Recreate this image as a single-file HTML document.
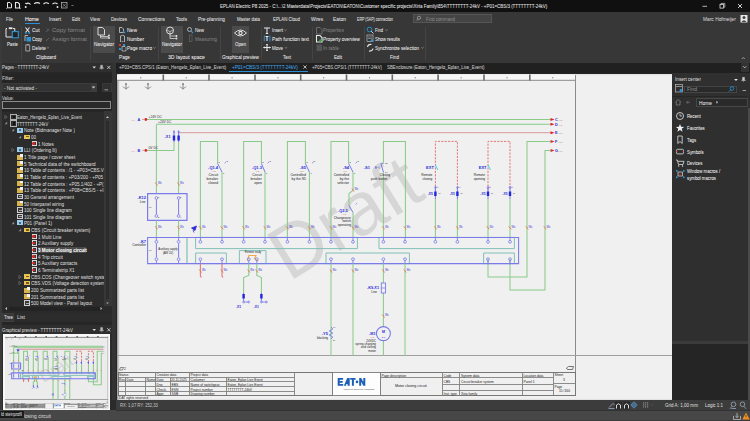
<!DOCTYPE html>
<html><head><meta charset="utf-8"><style>
*{margin:0;padding:0;box-sizing:border-box}
html,body{width:750px;height:421px;overflow:hidden}
body{background:#2b2b2b;position:relative;font-family:"Liberation Sans",sans-serif}
.t{position:absolute;white-space:nowrap;line-height:1;transform-origin:0 50%;-webkit-text-stroke:0.05px currentColor}
.r{position:absolute}
svg{position:absolute;left:0;top:0}
</style></head><body>
<div class="r" style="left:0px;top:0px;width:750px;height:12px;background:#101010;"></div>
<div class="r" style="left:0px;top:12px;width:750px;height:51px;background:#373737;"></div>
<div class="r" style="left:0px;top:63px;width:750px;height:10px;background:#202020;"></div>
<div class="r" style="left:0px;top:63px;width:112px;height:9px;background:#2e2e2e;"></div>
<div class="r" style="left:0px;top:72px;width:112px;height:2px;background:#272727;"></div>
<div class="r" style="left:0px;top:74px;width:112px;height:38px;background:#252525;"></div>
<div class="r" style="left:0px;top:112px;width:112px;height:199px;background:#2c2c2c;"></div>
<div class="r" style="left:0px;top:313px;width:112px;height:9px;background:#2c2c2c;"></div>
<div class="r" style="left:0px;top:322px;width:112px;height:3px;background:#262626;"></div>
<div class="r" style="left:0px;top:325px;width:112px;height:9px;background:#2e2e2e;"></div>
<div class="r" style="left:0px;top:334px;width:113px;height:77px;background:#2b2b2b;"></div>
<div class="r" style="left:112px;top:63px;width:4px;height:337px;background:#333333;"></div>
<div class="r" style="left:116px;top:73px;width:556px;height:327px;background:#262626;"></div>
<div class="r" style="left:116.5px;top:74px;width:555.5px;height:326px;background:#f0f0f0;box-shadow:inset 1.5px 0 1.5px rgba(0,0,0,0.35)"></div>
<div class="r" style="left:672px;top:73px;width:78px;height:268px;background:#2f2f2f;"></div>
<div class="r" style="left:672px;top:341px;width:78px;height:3px;background:#3b3b3b;"></div>
<div class="r" style="left:672px;top:344px;width:78px;height:56px;background:#252525;"></div>
<div class="r" style="left:747.5px;top:108px;width:2.5px;height:292px;background:#4a4a4a;"></div>
<div class="r" style="left:116px;top:400px;width:634px;height:10px;background:#3c3c3c;"></div>
<div class="r" style="left:0px;top:410px;width:750px;height:11px;background:#474747;"></div>
<div class="r" style="left:116px;top:409.7px;width:634px;height:0.9000000000000341px;background:#323232;"></div>
<div class="r" style="left:0px;top:420.2px;width:750px;height:0.8000000000000114px;background:#3c3c3c;"></div>
<div class="r" style="left:0px;top:12px;width:1.5px;height:398px;background:#3a3a3a;"></div>
<div class="t" style="left:220.0px;top:3.0px;font-size:6.12px;color:#e6e6e6;transform:scaleX(0.730);">EPLAN Electric P8 2025 - C:\...\2 Masterdata\Projects\EATON\EATON\Customer specific projects\Xiria Family\854\TTTTTTTT-24kV - +P01=CBS/3 (TTTTTTTT-24kV)</div>
<div class="t" style="left:6.0px;top:16.2px;font-size:6.12px;color:#e2e2e2;transform:scaleX(0.710);">File</div>
<div class="t" style="left:25.0px;top:16.2px;font-size:6.12px;color:#ffffff;transform:scaleX(0.858);">Home</div>
<div class="t" style="left:49.0px;top:16.2px;font-size:6.12px;color:#e2e2e2;transform:scaleX(0.784);">Insert</div>
<div class="t" style="left:72.0px;top:16.2px;font-size:6.12px;color:#e2e2e2;transform:scaleX(0.759);">Edit</div>
<div class="t" style="left:90.0px;top:16.2px;font-size:6.12px;color:#e2e2e2;transform:scaleX(0.760);">View</div>
<div class="t" style="left:111.0px;top:16.2px;font-size:6.12px;color:#e2e2e2;transform:scaleX(0.735);">Devices</div>
<div class="t" style="left:138.0px;top:16.2px;font-size:6.12px;color:#e2e2e2;transform:scaleX(0.794);">Connections</div>
<div class="t" style="left:176.0px;top:16.2px;font-size:6.12px;color:#e2e2e2;transform:scaleX(0.770);">Tools</div>
<div class="t" style="left:198.0px;top:16.2px;font-size:6.12px;color:#e2e2e2;transform:scaleX(0.778);">Pre-planning</div>
<div class="t" style="left:237.0px;top:16.2px;font-size:6.12px;color:#e2e2e2;transform:scaleX(0.712);">Master data</div>
<div class="t" style="left:273.0px;top:16.2px;font-size:6.12px;color:#e2e2e2;transform:scaleX(0.715);">EPLAN Cloud</div>
<div class="t" style="left:311.0px;top:16.2px;font-size:6.12px;color:#e2e2e2;transform:scaleX(0.767);">Wires</div>
<div class="t" style="left:333.0px;top:16.2px;font-size:6.12px;color:#e2e2e2;transform:scaleX(0.813);">Eaton</div>
<div class="t" style="left:357.0px;top:16.2px;font-size:6.12px;color:#e2e2e2;transform:scaleX(0.583);">ERP (SAP) connection</div>
<div class="r" style="left:25px;top:23px;width:15px;height:1px;background:#2c8fd6;"></div>
<div class="r" style="left:413px;top:14px;width:79px;height:9px;background:#444444;border:1px solid #555"></div>
<div class="t" style="left:426.0px;top:15.8px;font-size:6.12px;color:#8a8a8a;transform:scaleX(0.717);">Find command</div>
<div class="t" style="left:703.0px;top:16.2px;font-size:6.12px;color:#d0d0d0;transform:scaleX(0.795);">Marc Hofmeijer</div>
<div class="t" style="left:6.7px;top:40.9px;font-size:6.12px;color:#ececec;transform:scaleX(0.703);">Paste</div>
<div class="t" style="left:32.0px;top:27.2px;font-size:6.12px;color:#ececec;transform:scaleX(0.788);">Cut</div>
<div class="t" style="left:32.0px;top:36.2px;font-size:6.12px;color:#ececec;transform:scaleX(0.700);">Copy</div>
<div class="t" style="left:32.0px;top:44.8px;font-size:6.12px;color:#ececec;transform:scaleX(0.791);">Delete</div>
<div class="t" style="left:52.0px;top:27.2px;font-size:6.12px;color:#808080;transform:scaleX(0.990);">Copy format</div>
<div class="t" style="left:52.0px;top:36.2px;font-size:6.12px;color:#808080;transform:scaleX(0.936);">Assign format</div>
<div class="t" style="left:36.0px;top:54.2px;font-size:6.12px;color:#ececec;transform:scaleX(0.764);">Clipboard</div>
<div class="r" style="left:21px;top:27px;width:1px;height:33px;background:#444444;"></div>
<div class="r" style="left:90px;top:27px;width:1px;height:33px;background:#444444;"></div>
<div class="r" style="left:93px;top:26px;width:22px;height:27px;background:#4b4b4b;"></div>
<div class="t" style="left:94.0px;top:40.9px;font-size:6.12px;color:#ececec;transform:scaleX(0.764);">Navigator</div>
<div class="t" style="left:127.0px;top:27.2px;font-size:6.12px;color:#ececec;transform:scaleX(0.817);">New</div>
<div class="t" style="left:127.0px;top:36.2px;font-size:6.12px;color:#ececec;transform:scaleX(0.781);">Number</div>
<div class="t" style="left:127.0px;top:44.8px;font-size:6.12px;color:#ececec;transform:scaleX(0.758);">Page macro</div>
<div class="t" style="left:119.0px;top:54.2px;font-size:6.12px;color:#ececec;transform:scaleX(0.770);">Page</div>
<div class="r" style="left:158px;top:27px;width:1px;height:33px;background:#444444;"></div>
<div class="r" style="left:161px;top:26px;width:22px;height:27px;background:#4b4b4b;"></div>
<div class="t" style="left:162.0px;top:40.9px;font-size:6.12px;color:#ececec;transform:scaleX(0.764);">Navigator</div>
<div class="t" style="left:195.0px;top:27.2px;font-size:6.12px;color:#ececec;transform:scaleX(0.735);">New</div>
<div class="t" style="left:195.0px;top:36.2px;font-size:6.12px;color:#808080;transform:scaleX(0.770);">Measuring</div>
<div class="t" style="left:168.0px;top:54.2px;font-size:6.12px;color:#ececec;transform:scaleX(0.843);">3D layout space</div>
<div class="r" style="left:220px;top:27px;width:1px;height:33px;background:#444444;"></div>
<div class="r" style="left:232px;top:26px;width:17px;height:27px;background:#4b4b4b;"></div>
<div class="t" style="left:235.0px;top:40.9px;font-size:6.12px;color:#ececec;transform:scaleX(0.735);">Open</div>
<div class="t" style="left:222.0px;top:54.2px;font-size:6.12px;color:#ececec;transform:scaleX(0.755);">Graphical preview</div>
<div class="r" style="left:260.7px;top:27px;width:1.0px;height:33px;background:#444444;"></div>
<div class="t" style="left:272.0px;top:27.2px;font-size:6.12px;color:#ececec;transform:scaleX(0.719);">Insert</div>
<div class="t" style="left:272.0px;top:36.2px;font-size:6.12px;color:#ececec;transform:scaleX(0.782);">Path function text</div>
<div class="t" style="left:272.0px;top:44.8px;font-size:6.12px;color:#ececec;transform:scaleX(0.735);">Move</div>
<div class="t" style="left:283.0px;top:54.2px;font-size:6.12px;color:#ececec;transform:scaleX(0.713);">Text</div>
<div class="r" style="left:312px;top:27px;width:1px;height:33px;background:#444444;"></div>
<div class="t" style="left:323.0px;top:27.2px;font-size:6.12px;color:#808080;transform:scaleX(0.753);">Properties</div>
<div class="t" style="left:323.0px;top:36.2px;font-size:6.12px;color:#ececec;transform:scaleX(0.755);">Property overview</div>
<div class="t" style="left:323.0px;top:44.8px;font-size:6.12px;color:#808080;transform:scaleX(0.797);">In table</div>
<div class="t" style="left:334.0px;top:54.2px;font-size:6.12px;color:#ececec;transform:scaleX(0.759);">Edit</div>
<div class="r" style="left:364px;top:27px;width:1px;height:33px;background:#444444;"></div>
<div class="t" style="left:375.0px;top:27.2px;font-size:6.12px;color:#ececec;transform:scaleX(0.672);">Find</div>
<div class="t" style="left:375.0px;top:36.2px;font-size:6.12px;color:#ececec;transform:scaleX(0.714);">Show results</div>
<div class="t" style="left:375.0px;top:44.8px;font-size:6.12px;color:#ececec;transform:scaleX(0.739);">Synchronize selection</div>
<div class="t" style="left:390.0px;top:54.2px;font-size:6.12px;color:#ececec;transform:scaleX(0.756);">Find</div>
<div class="r" style="left:424.7px;top:27px;width:1.0px;height:33px;background:#444444;"></div>
<div class="t" style="left:2.0px;top:64.2px;font-size:6.12px;color:#d8d8d8;transform:scaleX(0.689);">Pages - TTTTTTTT-24kV</div>
<div class="t" style="left:119.0px;top:64.0px;font-size:6.12px;color:#cfcfcf;transform:scaleX(0.713);">+P03=CBS.CPS/1 (Eaton_Hengelo_Eplan_Live_Event)</div>
<div class="t" style="left:231.7px;top:64.0px;font-size:6.12px;color:#3ea6ea;transform:scaleX(0.758);">+P01=CBS/3 (TTTTTTTT-24kV)</div>
<div class="r" style="left:229px;top:71px;width:79px;height:1px;background:#2c8fd6;"></div>
<div class="t" style="left:311.7px;top:64.0px;font-size:6.12px;color:#cfcfcf;transform:scaleX(0.691);">+P05=CBS.CPS/1 (TTTTTTTT-24kV)</div>
<div class="t" style="left:386.7px;top:64.0px;font-size:6.12px;color:#cfcfcf;transform:scaleX(0.717);">SBEnclosure (Eaton_Hengelo_Eplan_Live_Event)</div>
<div class="r" style="left:740.5px;top:63px;width:8.5px;height:8.5px;background:#333333;"></div>
<div class="t" style="left:2.0px;top:75.2px;font-size:6.12px;color:#cfcfcf;transform:scaleX(0.784);">Filter:</div>
<div class="r" style="left:2px;top:82.5px;width:95px;height:9.5px;background:#333333;border:1px solid #3c3c3c"></div>
<div class="r" style="left:91px;top:83.5px;width:5px;height:7.5px;background:#3c3c3c;"></div>
<div class="t" style="left:4.0px;top:84.7px;font-size:6.12px;color:#d8d8d8;transform:scaleX(0.764);">- Not activated -</div>
<div class="r" style="left:101.5px;top:82.5px;width:10.5px;height:9.5px;background:#303030;border:1px solid #383838"></div>
<div class="t" style="left:2.0px;top:94.7px;font-size:6.12px;color:#cfcfcf;transform:scaleX(0.710);">Value:</div>
<div class="r" style="left:2px;top:101px;width:109px;height:8px;background:#2a2a2a;border:1px solid #8c8c8c"></div>
<svg style="position:absolute;left:4px;top:115.2px" width="4" height="4"><path d="M0.8,0.3 L3.2,2 L0.8,3.7 z" fill="none" stroke="#777" stroke-width="0.6"/></svg>
<div class="r" style="left:10px;top:114.0px;width:6.5px;height:6.400000000000006px;background:#2e2e2e;border:0.7px solid #b0b0b0"></div>
<div class="r" style="left:13px;top:115.9px;width:2px;height:2.5999999999999943px;background:#111;"></div>
<div class="t" style="left:17.0px;top:114.4px;font-size:6.12px;color:#d6d6d6;transform:scaleX(0.686);">Eaton_Hengelo_Eplan_Live_Event</div>
<svg style="position:absolute;left:4px;top:121.4px" width="4" height="4"><path d="M3.2,0.6 V3.2 H0.6 z" fill="#8a8a8a"/></svg>
<div class="r" style="left:10px;top:120.2px;width:6.5px;height:6.400000000000006px;background:#2e2e2e;border:0.7px solid #b0b0b0"></div>
<div class="r" style="left:13px;top:122.10000000000001px;width:2px;height:2.5999999999999943px;background:#111;"></div>
<div class="t" style="left:17.0px;top:120.6px;font-size:6.12px;color:#d6d6d6;transform:scaleX(0.686);">TTTTTTTT-24kV</div>
<svg style="position:absolute;left:11px;top:128.2px" width="4" height="4"><path d="M3.2,0.6 V3.2 H0.6 z" fill="#8a8a8a"/></svg>
<div class="r" style="left:17px;top:127.6px;width:6px;height:5.0px;background:#9ccbea;"></div>
<div class="r" style="left:19px;top:129.39999999999998px;width:2px;height:1.4000000000000057px;background:#4a6a8a;"></div>
<div class="t" style="left:24.0px;top:127.4px;font-size:6.12px;color:#d6d6d6;transform:scaleX(0.750);">Note (Bidmanager Note )</div>
<svg style="position:absolute;left:18px;top:134.9px" width="4" height="4"><path d="M3.2,0.6 V3.2 H0.6 z" fill="#8a8a8a"/></svg>
<div class="r" style="left:24px;top:134.70000000000002px;width:6px;height:4.599999999999994px;background:#e8c458;"></div>
<div class="r" style="left:25.5px;top:136.3px;width:3.0px;height:1.1999999999999886px;background:#7a5a10;"></div>
<div class="t" style="left:31.0px;top:134.1px;font-size:6.12px;color:#d6d6d6;transform:scaleX(0.750);">00</div>
<div class="r" style="left:31.5px;top:140.89999999999998px;width:5.5px;height:5.600000000000023px;background:#3a3a3a;border:0.8px solid #d8d8d8"></div>
<div class="r" style="left:32px;top:142.39999999999998px;width:2.6000000000000014px;height:2.6000000000000227px;background:#e02424;border-radius:50%"></div>
<div class="t" style="left:38.0px;top:140.9px;font-size:6.12px;color:#d6d6d6;transform:scaleX(0.750);">1 Notes</div>
<svg style="position:absolute;left:11px;top:148px" width="4" height="4"><path d="M0.8,0.3 L3.2,2 L0.8,3.7 z" fill="none" stroke="#777" stroke-width="0.6"/></svg>
<div class="r" style="left:17px;top:147.4px;width:6px;height:5.0px;background:#9ccbea;"></div>
<div class="r" style="left:19px;top:149.2px;width:2px;height:1.4000000000000057px;background:#4a6a8a;"></div>
<div class="t" style="left:24.0px;top:147.2px;font-size:6.12px;color:#d6d6d6;transform:scaleX(0.750);">LLI (Ordering lli)</div>
<div class="r" style="left:17px;top:154.8px;width:6px;height:4.799999999999983px;background:#d8b44e;"></div>
<div class="r" style="left:20.2px;top:154.4px;width:2.400000000000002px;height:2.799999999999983px;background:#f2f2f2;"></div>
<div class="t" style="left:24.0px;top:154.2px;font-size:6.12px;color:#d6d6d6;transform:scaleX(0.750);">1 Title page / cover sheet</div>
<div class="r" style="left:17px;top:161.20000000000002px;width:6px;height:4.799999999999983px;background:#d8b44e;"></div>
<div class="r" style="left:20.2px;top:160.8px;width:2.400000000000002px;height:2.799999999999983px;background:#f2f2f2;"></div>
<div class="t" style="left:24.0px;top:160.6px;font-size:6.12px;color:#d6d6d6;transform:scaleX(0.750);">5 Technical data of the switchboard</div>
<div class="r" style="left:17px;top:167.8px;width:6px;height:4.799999999999983px;background:#d8b44e;"></div>
<div class="r" style="left:20.2px;top:167.4px;width:2.400000000000002px;height:2.799999999999983px;background:#f2f2f2;"></div>
<div class="t" style="left:24.0px;top:167.2px;font-size:6.12px;color:#d6d6d6;transform:scaleX(0.750);">10 Table of contents : /1 - +P03=CBS.V</div>
<div class="r" style="left:17px;top:174.4px;width:6px;height:4.799999999999983px;background:#d8b44e;"></div>
<div class="r" style="left:20.2px;top:174.0px;width:2.400000000000002px;height:2.799999999999983px;background:#f2f2f2;"></div>
<div class="t" style="left:24.0px;top:173.8px;font-size:6.12px;color:#d6d6d6;transform:scaleX(0.750);">11 Table of contents : +P03/200 - +P05</div>
<div class="r" style="left:17px;top:181.10000000000002px;width:6px;height:4.799999999999983px;background:#d8b44e;"></div>
<div class="r" style="left:20.2px;top:180.70000000000002px;width:2.400000000000002px;height:2.799999999999983px;background:#f2f2f2;"></div>
<div class="t" style="left:24.0px;top:180.5px;font-size:6.12px;color:#d6d6d6;transform:scaleX(0.750);">12 Table of contents : +P05.1/402 - +P(</div>
<div class="r" style="left:17px;top:187.8px;width:6px;height:4.799999999999983px;background:#d8b44e;"></div>
<div class="r" style="left:20.2px;top:187.4px;width:2.400000000000002px;height:2.799999999999983px;background:#f2f2f2;"></div>
<div class="t" style="left:24.0px;top:187.2px;font-size:6.12px;color:#d6d6d6;transform:scaleX(0.750);">13 Table of contents : +P08=CBS/5 - +I</div>
<div class="r" style="left:17px;top:193.79999999999998px;width:6px;height:5.600000000000023px;background:#3a3a3a;border:0.8px solid #cfcfcf"></div>
<div class="r" style="left:18.5px;top:196.2px;width:3.0px;height:0.8000000000000114px;background:#aaa;"></div>
<div class="t" style="left:24.0px;top:193.8px;font-size:6.12px;color:#d6d6d6;transform:scaleX(0.750);">30 General arrangement</div>
<div class="r" style="left:17px;top:201.10000000000002px;width:6px;height:4.799999999999983px;background:#d8b44e;"></div>
<div class="r" style="left:20.2px;top:200.70000000000002px;width:2.400000000000002px;height:2.799999999999983px;background:#f2f2f2;"></div>
<div class="t" style="left:24.0px;top:200.5px;font-size:6.12px;color:#d6d6d6;transform:scaleX(0.750);">50 Interpanel wiring</div>
<div class="r" style="left:17px;top:207.2px;width:6px;height:5.600000000000023px;background:#3a3a3a;border:0.8px solid #cfcfcf"></div>
<div class="r" style="left:18.5px;top:209.6px;width:3.0px;height:0.8000000000000114px;background:#aaa;"></div>
<div class="t" style="left:24.0px;top:207.2px;font-size:6.12px;color:#d6d6d6;transform:scaleX(0.750);">100 Single line diagram</div>
<div class="r" style="left:17px;top:213.79999999999998px;width:6px;height:5.600000000000023px;background:#3a3a3a;border:0.8px solid #cfcfcf"></div>
<div class="r" style="left:18.5px;top:216.2px;width:3.0px;height:0.8000000000000114px;background:#aaa;"></div>
<div class="t" style="left:24.0px;top:213.8px;font-size:6.12px;color:#d6d6d6;transform:scaleX(0.750);">101 Single line diagram</div>
<svg style="position:absolute;left:11px;top:221px" width="4" height="4"><path d="M3.2,0.6 V3.2 H0.6 z" fill="#8a8a8a"/></svg>
<div class="r" style="left:17px;top:220.4px;width:6px;height:5.0px;background:#9ccbea;"></div>
<div class="r" style="left:19px;top:222.2px;width:2px;height:1.4000000000000057px;background:#4a6a8a;"></div>
<div class="t" style="left:24.0px;top:220.2px;font-size:6.12px;color:#d6d6d6;transform:scaleX(0.750);">P01 (Panel 1)</div>
<svg style="position:absolute;left:18px;top:228px" width="4" height="4"><path d="M3.2,0.6 V3.2 H0.6 z" fill="#8a8a8a"/></svg>
<div class="r" style="left:24px;top:227.8px;width:6px;height:4.599999999999994px;background:#e8c458;"></div>
<div class="r" style="left:25.5px;top:229.4px;width:3.0px;height:1.1999999999999886px;background:#7a5a10;"></div>
<div class="t" style="left:31.0px;top:227.2px;font-size:6.12px;color:#d6d6d6;transform:scaleX(0.750);">CBS (Circuit breaker system)</div>
<div class="r" style="left:31.5px;top:233.79999999999998px;width:5.5px;height:5.600000000000023px;background:#3a3a3a;border:0.8px solid #d8d8d8"></div>
<div class="r" style="left:32px;top:235.29999999999998px;width:2.6000000000000014px;height:2.6000000000000227px;background:#e02424;border-radius:50%"></div>
<div class="t" style="left:38.0px;top:233.8px;font-size:6.12px;color:#d6d6d6;transform:scaleX(0.750);">1 Multi Line</div>
<div class="r" style="left:31.5px;top:240.2px;width:5.5px;height:5.600000000000023px;background:#3a3a3a;border:0.8px solid #d8d8d8"></div>
<div class="r" style="left:32px;top:241.7px;width:2.6000000000000014px;height:2.6000000000000227px;background:#e02424;border-radius:50%"></div>
<div class="t" style="left:38.0px;top:240.2px;font-size:6.12px;color:#d6d6d6;transform:scaleX(0.750);">2 Auxiliary supply</div>
<div class="r" style="left:37.5px;top:246.5px;width:48.5px;height:6.800000000000011px;background:#4a4a4a;"></div>
<div class="r" style="left:31.5px;top:247.2px;width:5.5px;height:5.600000000000023px;background:#3a3a3a;border:0.8px solid #d8d8d8"></div>
<div class="r" style="left:32px;top:248.7px;width:2.6000000000000014px;height:2.6000000000000227px;background:#e02424;border-radius:50%"></div>
<div class="t" style="left:38.0px;top:247.2px;font-size:6.12px;color:#ffffff;font-weight:bold;transform:scaleX(0.750);">3 Motor closing circuit</div>
<div class="r" style="left:31.5px;top:253.8px;width:5.5px;height:5.600000000000023px;background:#3a3a3a;border:0.8px solid #d8d8d8"></div>
<div class="r" style="left:32px;top:255.3px;width:2.6000000000000014px;height:2.6000000000000227px;background:#e02424;border-radius:50%"></div>
<div class="t" style="left:38.0px;top:253.8px;font-size:6.12px;color:#d6d6d6;transform:scaleX(0.750);">4 Trip circuit</div>
<div class="r" style="left:31.5px;top:260.2px;width:5.5px;height:5.600000000000023px;background:#3a3a3a;border:0.8px solid #d8d8d8"></div>
<div class="r" style="left:32px;top:261.7px;width:2.6000000000000014px;height:2.6000000000000227px;background:#e02424;border-radius:50%"></div>
<div class="t" style="left:38.0px;top:260.2px;font-size:6.12px;color:#d6d6d6;transform:scaleX(0.750);">5 Auxiliary contacts</div>
<div class="r" style="left:31.5px;top:267.2px;width:5.5px;height:5.600000000000023px;background:#3a3a3a;border:0.8px solid #d8d8d8"></div>
<div class="r" style="left:32px;top:268.7px;width:2.6000000000000014px;height:2.6000000000000227px;background:#e02424;border-radius:50%"></div>
<div class="t" style="left:38.0px;top:267.2px;font-size:6.12px;color:#d6d6d6;transform:scaleX(0.750);">6 Terminalstrip X1</div>
<svg style="position:absolute;left:18px;top:274.6px" width="4" height="4"><path d="M0.8,0.3 L3.2,2 L0.8,3.7 z" fill="none" stroke="#777" stroke-width="0.6"/></svg>
<div class="r" style="left:24px;top:274.40000000000003px;width:6px;height:4.599999999999966px;background:#e8c458;"></div>
<div class="r" style="left:25.5px;top:276.0px;width:3.0px;height:1.2000000000000455px;background:#7a5a10;"></div>
<div class="t" style="left:31.0px;top:273.8px;font-size:6.12px;color:#d6d6d6;transform:scaleX(0.750);">CBS.COS (Changeover switch syste</div>
<svg style="position:absolute;left:18px;top:281px" width="4" height="4"><path d="M0.8,0.3 L3.2,2 L0.8,3.7 z" fill="none" stroke="#777" stroke-width="0.6"/></svg>
<div class="r" style="left:24px;top:280.8px;width:6px;height:4.599999999999966px;background:#e8c458;"></div>
<div class="r" style="left:25.5px;top:282.4px;width:3.0px;height:1.2000000000000455px;background:#7a5a10;"></div>
<div class="t" style="left:31.0px;top:280.2px;font-size:6.12px;color:#d6d6d6;transform:scaleX(0.750);">CBS.VDS (Voltage detection system</div>
<div class="r" style="left:24px;top:287.8px;width:6px;height:4.800000000000011px;background:#d8b44e;"></div>
<div class="r" style="left:27.2px;top:287.4px;width:2.400000000000002px;height:2.8000000000000114px;background:#f2f2f2;"></div>
<div class="t" style="left:31.0px;top:287.2px;font-size:6.12px;color:#d6d6d6;transform:scaleX(0.750);">200 Summarized parts list</div>
<div class="r" style="left:24px;top:294.40000000000003px;width:6px;height:4.800000000000011px;background:#d8b44e;"></div>
<div class="r" style="left:27.2px;top:294.0px;width:2.400000000000002px;height:2.8000000000000114px;background:#f2f2f2;"></div>
<div class="t" style="left:31.0px;top:293.8px;font-size:6.12px;color:#d6d6d6;transform:scaleX(0.750);">201 Summarized parts list</div>
<div class="r" style="left:24px;top:300.2px;width:6px;height:5.600000000000023px;background:#3a3a3a;border:0.8px solid #cfcfcf"></div>
<div class="r" style="left:25.5px;top:302.6px;width:3.0px;height:0.7999999999999545px;background:#aaa;"></div>
<div class="t" style="left:31.0px;top:300.2px;font-size:6.12px;color:#d6d6d6;transform:scaleX(0.750);">500 Model view - Panel layout</div>
<div class="r" style="left:104px;top:111px;width:8px;height:195px;background:#373737;"></div>
<div class="r" style="left:106px;top:121px;width:3px;height:178px;background:#2c2c2c;"></div>
<div class="r" style="left:1.5px;top:305.5px;width:110.5px;height:7.5px;background:#2a2a2a;"></div>
<div class="r" style="left:9px;top:306.5px;width:91px;height:4.5px;background:#232323;"></div>
<div class="r" style="left:2px;top:313px;width:12px;height:8.5px;background:#363636;border:1px solid #3e3e3e"></div>
<div class="t" style="left:4.0px;top:314.2px;font-size:6.12px;color:#e0e0e0;transform:scaleX(0.728);">Tree</div>
<div class="t" style="left:17.0px;top:314.2px;font-size:6.12px;color:#cfcfcf;transform:scaleX(0.840);">List</div>
<div class="t" style="left:2.0px;top:326.8px;font-size:6.12px;color:#d8d8d8;transform:scaleX(0.711);">Graphical preview - TTTTTTTT-24kV</div>
<div class="r" style="left:3px;top:334px;width:107px;height:76px;background:#f8f8f8;"></div>
<div class="r" style="left:5px;top:336px;width:103px;height:72px;background:#ececec;"></div>
<div class="r" style="left:0px;top:411px;width:24px;height:7px;background:#1a1a1a;"></div>
<div class="t" style="left:1.0px;top:412.2px;font-size:5.1px;color:#dddddd;transform:scaleX(0.772);">ld steinprofil</div>
<div class="t" style="left:24.0px;top:413.2px;font-size:6.12px;color:#cfcfcf;transform:scaleX(0.802);">losing circuit</div>
<div class="t" style="left:675.0px;top:76.2px;font-size:6.12px;color:#d8d8d8;transform:scaleX(0.764);">Insert center</div>
<div class="r" style="left:684px;top:85.7px;width:53px;height:7.099999999999994px;background:#2a2a2a;border:1px solid #444"></div>
<div class="t" style="left:687.0px;top:86.4px;font-size:6.12px;color:#8a8a8a;transform:scaleX(0.840);">Find</div>
<div class="r" style="left:672px;top:95.5px;width:75px;height:1.0px;background:#262626;"></div>
<div class="r" style="left:696px;top:97.6px;width:52px;height:9.400000000000006px;background:#2a2a2a;border:1px solid #474747"></div>
<div class="t" style="left:699.0px;top:99.5px;font-size:6.12px;color:#e0e0e0;transform:scaleX(0.796);">Home</div>
<div class="t" style="left:687.0px;top:113.2px;font-size:6.12px;color:#eeeeee;transform:scaleX(0.706);">Recent</div>
<div class="t" style="left:687.0px;top:125.2px;font-size:6.12px;color:#eeeeee;transform:scaleX(0.706);">Favorites</div>
<div class="t" style="left:687.0px;top:136.9px;font-size:6.12px;color:#eeeeee;transform:scaleX(0.706);">Tags</div>
<div class="t" style="left:687.0px;top:148.8px;font-size:6.12px;color:#eeeeee;transform:scaleX(0.706);">Symbols</div>
<div class="t" style="left:687.0px;top:160.2px;font-size:6.12px;color:#eeeeee;transform:scaleX(0.706);">Devices</div>
<div class="t" style="left:687.0px;top:168.2px;font-size:6.12px;color:#eeeeee;transform:scaleX(0.706);">Window macros /</div>
<div class="t" style="left:687.0px;top:175.2px;font-size:6.12px;color:#eeeeee;transform:scaleX(0.706);">symbol macros</div>
<div class="t" style="left:120.0px;top:402.2px;font-size:6.12px;color:#c0c0c0;transform:scaleX(0.682);">RX: 1,07 RY: 252,33</div>
<div class="t" style="left:665.0px;top:402.2px;font-size:6.12px;color:#d8d8d8;transform:scaleX(0.746);">Grid A: 1,00 mm</div>
<div class="t" style="left:705.0px;top:402.2px;font-size:6.12px;color:#d8d8d8;transform:scaleX(0.725);">Logic 1:1</div>
<svg width="750" height="421" viewBox="0 0 750 421" font-family="Liberation Sans, sans-serif"><g id="sch"><text x="0" y="0" font-size="75" fill="#d6d6d6" transform="translate(289,282) rotate(-31.5)" font-family="Liberation Sans">Draft</text>
<rect x="117" y="74.5" width="458.5" height="6" fill="#f6f6f6"/>
<line x1="117" y1="80.3" x2="575.5" y2="80.3" stroke="#8a8a8a" stroke-width="1" vector-effect="non-scaling-stroke" />
<line x1="163.3" y1="74.5" x2="163.3" y2="80.5" stroke="#6a6a6a" stroke-width="1.6" vector-effect="non-scaling-stroke" />
<line x1="209" y1="74.5" x2="209" y2="80.5" stroke="#6a6a6a" stroke-width="1.6" vector-effect="non-scaling-stroke" />
<line x1="255" y1="74.5" x2="255" y2="80.5" stroke="#6a6a6a" stroke-width="1.6" vector-effect="non-scaling-stroke" />
<line x1="300.7" y1="74.5" x2="300.7" y2="80.5" stroke="#6a6a6a" stroke-width="1.6" vector-effect="non-scaling-stroke" />
<line x1="346.5" y1="74.5" x2="346.5" y2="80.5" stroke="#6a6a6a" stroke-width="1.6" vector-effect="non-scaling-stroke" />
<line x1="392.3" y1="74.5" x2="392.3" y2="80.5" stroke="#6a6a6a" stroke-width="1.6" vector-effect="non-scaling-stroke" />
<line x1="438.1" y1="74.5" x2="438.1" y2="80.5" stroke="#6a6a6a" stroke-width="1.6" vector-effect="non-scaling-stroke" />
<line x1="484" y1="74.5" x2="484" y2="80.5" stroke="#6a6a6a" stroke-width="1.6" vector-effect="non-scaling-stroke" />
<line x1="529.8" y1="74.5" x2="529.8" y2="80.5" stroke="#6a6a6a" stroke-width="1.6" vector-effect="non-scaling-stroke" />
<rect x="140.15" y="77" width="1.2" height="1.4" fill="#999"/>
<rect x="185.65" y="77" width="1.2" height="1.4" fill="#999"/>
<rect x="231.5" y="77" width="1.2" height="1.4" fill="#999"/>
<rect x="277.35" y="77" width="1.2" height="1.4" fill="#999"/>
<rect x="323.1" y="77" width="1.2" height="1.4" fill="#999"/>
<rect x="368.9" y="77" width="1.2" height="1.4" fill="#999"/>
<rect x="414.70000000000005" y="77" width="1.2" height="1.4" fill="#999"/>
<rect x="460.55" y="77" width="1.2" height="1.4" fill="#999"/>
<rect x="506.4" y="77" width="1.2" height="1.4" fill="#999"/>
<rect x="552.15" y="77" width="1.2" height="1.4" fill="#999"/>
<line x1="575.5" y1="75" x2="575.5" y2="395" stroke="#8c8c8c" stroke-width="1" vector-effect="non-scaling-stroke" />
<line x1="117" y1="355.5" x2="672" y2="355.5" stroke="#a0a0a0" stroke-width="1" vector-effect="non-scaling-stroke" />
<path d="M123,86.5 q3,4 6,0 M126,84 v5.5" stroke="#8a8a8a" stroke-width="1" fill="none"/>
<circle cx="126" cy="84" r="1.1" fill="#8a8a8a"/>
<path d="M145,86.5 q3,4 6,0 M148,84 v5.5" stroke="#8a8a8a" stroke-width="1" fill="none"/>
<circle cx="148" cy="84" r="1.1" fill="#8a8a8a"/>
<path d="M180,86.5 q3,4 6,0 M183,84 v5.5" stroke="#8a8a8a" stroke-width="1" fill="none"/>
<circle cx="183" cy="84" r="1.1" fill="#8a8a8a"/>
<line x1="147" y1="119.5" x2="551" y2="119.5" stroke="#8acb8a" stroke-width="1.05" vector-effect="non-scaling-stroke" />
<line x1="156.4" y1="124.3" x2="551" y2="124.3" stroke="#8acb8a" stroke-width="1.05" vector-effect="non-scaling-stroke" />
<line x1="179" y1="132.7" x2="551" y2="132.7" stroke="#dcaaaa" stroke-width="1.3" vector-effect="non-scaling-stroke" />
<polyline points="147,150.4 174,150.4 174,142" fill="none" stroke="#8acb8a" stroke-width="1.05" vector-effect="non-scaling-stroke" />
<line x1="156.4" y1="124.3" x2="156.4" y2="193.6" stroke="#8acb8a" stroke-width="1.05" vector-effect="non-scaling-stroke" />
<line x1="178.6" y1="142" x2="178.6" y2="193.6" stroke="#8acb8a" stroke-width="1.05" vector-effect="non-scaling-stroke" />
<line x1="174" y1="130.5" x2="174" y2="142" stroke="#7a7aea" stroke-width="1.1" vector-effect="non-scaling-stroke" />
<path d="M173,132 l1,-1.2 l1,1.2 l-1,1.2z" fill="none" stroke="#7a7aea" stroke-width="0.6"/>
<rect x="172.8" y="135.5" width="2.4" height="5" fill="#2424e0"/>
<line x1="178.6" y1="130.5" x2="178.6" y2="142" stroke="#7a7aea" stroke-width="1.1" vector-effect="non-scaling-stroke" />
<path d="M177.6,132 l1,-1.2 l1,1.2 l-1,1.2z" fill="none" stroke="#7a7aea" stroke-width="0.6"/>
<rect x="177.4" y="135.5" width="2.4" height="5" fill="#2424e0"/>
<text x="170.5" y="138.3" font-size="3.8" fill="#2c2cd8" text-anchor="end" font-weight="bold">-X1</text>
<path d="M550.5,118.0 L554.5,119.5 L550.5,121.0z" fill="#e02020"/>
<text x="555" y="120.9" font-size="3.8" fill="#2c2cd8" text-anchor="start" font-weight="bold">C</text>
<text x="558.5" y="120.7" font-size="2.3" fill="#b55" text-anchor="start" >/4.0</text>
<path d="M550.5,122.8 L554.5,124.3 L550.5,125.8z" fill="#e02020"/>
<text x="555" y="125.7" font-size="3.8" fill="#2c2cd8" text-anchor="start" font-weight="bold">D</text>
<text x="558.5" y="125.5" font-size="2.3" fill="#b55" text-anchor="start" >/4.0</text>
<path d="M550.5,131.2 L554.5,132.7 L550.5,134.2z" fill="#e02020"/>
<text x="555" y="134.1" font-size="3.8" fill="#2c2cd8" text-anchor="start" font-weight="bold">E</text>
<text x="558.5" y="133.89999999999998" font-size="2.3" fill="#b55" text-anchor="start" >/4.0</text>
<path d="M550.5,139.9 L554.5,141.4 L550.5,142.9z" fill="#e02020"/>
<text x="555" y="142.8" font-size="3.8" fill="#2c2cd8" text-anchor="start" font-weight="bold">F</text>
<text x="558.5" y="142.6" font-size="2.3" fill="#b55" text-anchor="start" >/4.0</text>
<path d="M550.5,148.9 L554.5,150.4 L550.5,151.9z" fill="#e02020"/>
<text x="555" y="151.8" font-size="3.8" fill="#2c2cd8" text-anchor="start" font-weight="bold">G</text>
<text x="558.5" y="151.6" font-size="2.3" fill="#b55" text-anchor="start" >/4.0</text>
<circle cx="145.8" cy="119.5" r="1.4" fill="#e02020"/>
<line x1="142" y1="119.5" x2="145" y2="119.5" stroke="#e88" stroke-width="0.8" vector-effect="non-scaling-stroke" />
<text x="138.8" y="120.9" font-size="3.8" fill="#2c2cd8" text-anchor="middle" font-weight="bold">A</text>
<text x="131" y="120.6" font-size="2.3" fill="#c77" text-anchor="start" >/4.0</text>
<circle cx="145.8" cy="150.4" r="1.4" fill="#e02020"/>
<line x1="142" y1="150.4" x2="145" y2="150.4" stroke="#e88" stroke-width="0.8" vector-effect="non-scaling-stroke" />
<text x="138.8" y="151.8" font-size="3.8" fill="#2c2cd8" text-anchor="middle" font-weight="bold">B</text>
<text x="131" y="151.5" font-size="2.3" fill="#c77" text-anchor="start" >/4.0</text>
<text x="148.5" y="118.2" font-size="3.3" fill="#333" text-anchor="start" >+24V DC</text>
<text x="158" y="123" font-size="3.3" fill="#333" text-anchor="start" >+24V DC</text>
<text x="148.5" y="149.1" font-size="3.3" fill="#333" text-anchor="start" >0V DC</text>
<polyline points="200.4,237.4 200.4,141.4 217.6,141.4 217.6,163.5" fill="none" stroke="#8acb8a" stroke-width="1.05" vector-effect="non-scaling-stroke" />
<polyline points="217.6,163.5 222,172" fill="none" stroke="#7a7aea" stroke-width="1" vector-effect="non-scaling-stroke" />
<polyline points="224.6,163.2 226.2,161.8" fill="none" stroke="#7a7aea" stroke-width="0.8" vector-effect="non-scaling-stroke" />
<text x="218.4" y="162.8" font-size="2.2" fill="#202020" text-anchor="start" >2</text>
<text x="226.4" y="161.5" font-size="2.2" fill="#202020" text-anchor="start" >3</text>
<text x="223" y="174" font-size="2.2" fill="#202020" text-anchor="start" >1</text>
<line x1="222" y1="172" x2="222" y2="237.4" stroke="#8acb8a" stroke-width="1.05" vector-effect="non-scaling-stroke" />
<text x="218.1" y="169.3" font-size="4.0" fill="#2c2cd8" text-anchor="end" font-weight="bold">-Q1.4</text>
<text x="215.6" y="172.4" font-size="2" fill="#d33" text-anchor="end" >/4.8</text>
<text x="218.1" y="176.4" font-size="3.4" fill="#202020" text-anchor="end" >Circuit</text>
<text x="218.1" y="180.1" font-size="3.4" fill="#202020" text-anchor="end" >breaker</text>
<text x="218.1" y="183.8" font-size="3.4" fill="#202020" text-anchor="end" >closed</text>
<polyline points="243.6,237.4 243.6,141.4 261.4,141.4 261.4,163.5" fill="none" stroke="#8acb8a" stroke-width="1.05" vector-effect="non-scaling-stroke" />
<polyline points="261.4,163.5 265,172" fill="none" stroke="#7a7aea" stroke-width="1" vector-effect="non-scaling-stroke" />
<polyline points="267.6,163.2 269.2,161.8" fill="none" stroke="#7a7aea" stroke-width="0.8" vector-effect="non-scaling-stroke" />
<text x="262.2" y="162.8" font-size="2.2" fill="#202020" text-anchor="start" >2</text>
<text x="269.4" y="161.5" font-size="2.2" fill="#202020" text-anchor="start" >3</text>
<text x="266" y="174" font-size="2.2" fill="#202020" text-anchor="start" >1</text>
<line x1="265" y1="172" x2="265" y2="237.4" stroke="#8acb8a" stroke-width="1.05" vector-effect="non-scaling-stroke" />
<text x="261.9" y="169.3" font-size="4.0" fill="#2c2cd8" text-anchor="end" font-weight="bold">-Q1.3</text>
<text x="259.4" y="172.4" font-size="2" fill="#d33" text-anchor="end" >/4.8</text>
<text x="261.9" y="176.4" font-size="3.4" fill="#202020" text-anchor="end" >Circuit</text>
<text x="261.9" y="180.1" font-size="3.4" fill="#202020" text-anchor="end" >breaker</text>
<text x="261.9" y="183.8" font-size="3.4" fill="#202020" text-anchor="end" >open</text>
<polyline points="287.4,237.4 287.4,141.4 305.4,141.4 305.4,163.5" fill="none" stroke="#8acb8a" stroke-width="1.05" vector-effect="non-scaling-stroke" />
<polyline points="305.4,163.5 309.4,172" fill="none" stroke="#7a7aea" stroke-width="1" vector-effect="non-scaling-stroke" />
<polyline points="312.0,163.2 313.59999999999997,161.8" fill="none" stroke="#7a7aea" stroke-width="0.8" vector-effect="non-scaling-stroke" />
<text x="306.2" y="162.8" font-size="2.2" fill="#202020" text-anchor="start" >2</text>
<text x="313.79999999999995" y="161.5" font-size="2.2" fill="#202020" text-anchor="start" >3</text>
<text x="310.4" y="174" font-size="2.2" fill="#202020" text-anchor="start" >1</text>
<line x1="309.4" y1="172" x2="309.4" y2="237.4" stroke="#8acb8a" stroke-width="1.05" vector-effect="non-scaling-stroke" />
<text x="305.9" y="169.3" font-size="4.0" fill="#2c2cd8" text-anchor="end" font-weight="bold">-S5</text>
<text x="303.4" y="172.4" font-size="2" fill="#d33" text-anchor="end" >/4.8</text>
<text x="305.9" y="176.4" font-size="3.4" fill="#202020" text-anchor="end" >Controlled</text>
<text x="305.9" y="180.1" font-size="3.4" fill="#202020" text-anchor="end" >by the S5</text>
<polyline points="331,237.4 331,141.4 348.6,141.4 348.6,163.5" fill="none" stroke="#8acb8a" stroke-width="1.05" vector-effect="non-scaling-stroke" />
<polyline points="348.6,163.5 353,172" fill="none" stroke="#7a7aea" stroke-width="1" vector-effect="non-scaling-stroke" />
<polyline points="355.6,163.2 357.2,161.8" fill="none" stroke="#7a7aea" stroke-width="0.8" vector-effect="non-scaling-stroke" />
<text x="349.40000000000003" y="162.8" font-size="2.2" fill="#202020" text-anchor="start" >2</text>
<text x="357.4" y="161.5" font-size="2.2" fill="#202020" text-anchor="start" >3</text>
<text x="354" y="174" font-size="2.2" fill="#202020" text-anchor="start" >1</text>
<polyline points="353,172 353,190.5 349,193.5 349,205.5" fill="none" stroke="#8acb8a" stroke-width="1.05" vector-effect="non-scaling-stroke" />
<polyline points="349,205.5 353,212.5" fill="none" stroke="#7a7aea" stroke-width="1" vector-effect="non-scaling-stroke" />
<polyline points="355.6,204.5 357.2,203" fill="none" stroke="#7a7aea" stroke-width="0.8" vector-effect="non-scaling-stroke" />
<line x1="353" y1="212.5" x2="353" y2="237.4" stroke="#8acb8a" stroke-width="1.05" vector-effect="non-scaling-stroke" />
<text x="349.1" y="169.3" font-size="4.0" fill="#2c2cd8" text-anchor="end" font-weight="bold">-S4</text>
<text x="346.6" y="172.4" font-size="2" fill="#d33" text-anchor="end" >/4.8</text>
<text x="349.1" y="176.4" font-size="3.4" fill="#202020" text-anchor="end" >Controlled</text>
<text x="349.1" y="180.1" font-size="3.4" fill="#202020" text-anchor="end" >by the</text>
<text x="349.1" y="183.8" font-size="3.4" fill="#202020" text-anchor="end" >selector</text>
<polyline points="383.4,163.5 383.4,141.4 405.4,141.4 405.4,237.4" fill="none" stroke="#8acb8a" stroke-width="1.05" vector-effect="non-scaling-stroke" />
<line x1="383.4" y1="172" x2="383.4" y2="237.4" stroke="#8acb8a" stroke-width="1.05" vector-effect="non-scaling-stroke" />
<polyline points="383.4,163.5 380.8,163.5" fill="none" stroke="#7a7aea" stroke-width="0.8" vector-effect="non-scaling-stroke" />
<polyline points="381,164 383.4,172" fill="none" stroke="#7a7aea" stroke-width="1" vector-effect="non-scaling-stroke" />
<text x="370" y="169.3" font-size="4.0" fill="#2c2cd8" text-anchor="end" font-weight="bold">-S1</text>
<text x="375" y="169" font-size="3" fill="#2c2cd8" text-anchor="start" >E~\</text>
<text x="385" y="164" font-size="2.2" fill="#202020" text-anchor="start" >13</text>
<text x="385" y="173" font-size="2.2" fill="#202020" text-anchor="start" >14</text>
<text x="385" y="176.2" font-size="3.2" fill="#202020" text-anchor="middle" >Closing</text>
<text x="379" y="179.9" font-size="3.2" fill="#202020" text-anchor="middle" >push button</text>
<polyline points="435.4,190 435.4,141.4 457.4,141.4 457.4,190" fill="none" stroke="#e07878" stroke-width="1" vector-effect="non-scaling-stroke" stroke-dasharray="2.2,1.2"/>
<line x1="435.4" y1="165" x2="437.9" y2="170" stroke="#40d8e8" stroke-width="1" vector-effect="non-scaling-stroke" />
<text x="433.9" y="169.3" font-size="4" fill="#2c2cd8" text-anchor="end" font-weight="bold">EXT</text>
<text x="432.4" y="176.2" font-size="3.2" fill="#202020" text-anchor="end" >Remote</text>
<text x="432.4" y="179.89999999999998" font-size="3.2" fill="#202020" text-anchor="end" >closing</text>
<line x1="435.4" y1="186.5" x2="435.4" y2="199" stroke="#7a7aea" stroke-width="1" vector-effect="non-scaling-stroke" />
<path d="M434.4,187.5 l1,-1.2 l1,1.2 l-1,1.2z M435.4,187.3 h3" fill="none" stroke="#7a7aea" stroke-width="0.6"/>
<rect x="434.2" y="191.5" width="2.4" height="4.5" fill="#2424e0"/>
<text x="432.9" y="194.5" font-size="3.3" fill="#2c2cd8" text-anchor="end" font-weight="bold">-X5</text>
<text x="438.4" y="194.3" font-size="2" fill="#202020" text-anchor="start" >14</text>
<line x1="435.4" y1="199" x2="435.4" y2="237.4" stroke="#8acb8a" stroke-width="1.05" vector-effect="non-scaling-stroke" />
<line x1="457.4" y1="186.5" x2="457.4" y2="199" stroke="#7a7aea" stroke-width="1" vector-effect="non-scaling-stroke" />
<path d="M456.4,187.5 l1,-1.2 l1,1.2 l-1,1.2z M457.4,187.3 h3" fill="none" stroke="#7a7aea" stroke-width="0.6"/>
<rect x="456.2" y="191.5" width="2.4" height="4.5" fill="#2424e0"/>
<text x="454.9" y="194.5" font-size="3.3" fill="#2c2cd8" text-anchor="end" font-weight="bold">-X5</text>
<text x="460.4" y="194.3" font-size="2" fill="#202020" text-anchor="start" >14</text>
<line x1="457.4" y1="199" x2="457.4" y2="237.4" stroke="#8acb8a" stroke-width="1.05" vector-effect="non-scaling-stroke" />
<polyline points="488,190 488,141.4 510,141.4 510,190" fill="none" stroke="#e07878" stroke-width="1" vector-effect="non-scaling-stroke" stroke-dasharray="2.2,1.2"/>
<line x1="488" y1="165" x2="490.5" y2="170" stroke="#40d8e8" stroke-width="1" vector-effect="non-scaling-stroke" />
<text x="486.5" y="169.3" font-size="4" fill="#2c2cd8" text-anchor="end" font-weight="bold">EXT</text>
<text x="485" y="176.2" font-size="3.2" fill="#202020" text-anchor="end" >Remote</text>
<text x="485" y="179.89999999999998" font-size="3.2" fill="#202020" text-anchor="end" >opening</text>
<line x1="488" y1="186.5" x2="488" y2="199" stroke="#7a7aea" stroke-width="1" vector-effect="non-scaling-stroke" />
<path d="M487,187.5 l1,-1.2 l1,1.2 l-1,1.2z M488,187.3 h3" fill="none" stroke="#7a7aea" stroke-width="0.6"/>
<rect x="486.8" y="191.5" width="2.4" height="4.5" fill="#2424e0"/>
<text x="485.5" y="194.5" font-size="3.3" fill="#2c2cd8" text-anchor="end" font-weight="bold">-X5</text>
<text x="491" y="194.3" font-size="2" fill="#202020" text-anchor="start" >14</text>
<line x1="488" y1="199" x2="488" y2="237.4" stroke="#8acb8a" stroke-width="1.05" vector-effect="non-scaling-stroke" />
<line x1="510" y1="186.5" x2="510" y2="199" stroke="#7a7aea" stroke-width="1" vector-effect="non-scaling-stroke" />
<path d="M509,187.5 l1,-1.2 l1,1.2 l-1,1.2z M510,187.3 h3" fill="none" stroke="#7a7aea" stroke-width="0.6"/>
<rect x="508.8" y="191.5" width="2.4" height="4.5" fill="#2424e0"/>
<text x="507.5" y="194.5" font-size="3.3" fill="#2c2cd8" text-anchor="end" font-weight="bold">-X5</text>
<text x="513" y="194.3" font-size="2" fill="#202020" text-anchor="start" >14</text>
<line x1="510" y1="199" x2="510" y2="237.4" stroke="#8acb8a" stroke-width="1.05" vector-effect="non-scaling-stroke" />
<polyline points="551,141.4 527,141.4 527,277 488,277 488,259" fill="none" stroke="#8acb8a" stroke-width="1.05" vector-effect="non-scaling-stroke" />
<polyline points="551,150.4 545,150.4 545,290 510,290 510,259" fill="none" stroke="#8acb8a" stroke-width="1.05" vector-effect="non-scaling-stroke" />
<rect x="147.6" y="193.6" width="39.400000000000006" height="26.80000000000001" stroke="#7a7aea" stroke-width="1.2" fill="none" vector-effect="non-scaling-stroke"/>
<line x1="156.4" y1="199.5" x2="156.4" y2="214.5" stroke="#7a7aea" stroke-width="1" vector-effect="non-scaling-stroke" />
<circle cx="156.4" cy="198" r="1.4" fill="none" stroke="#7a7aea" stroke-width="0.8"/>
<circle cx="156.4" cy="216" r="1.4" fill="none" stroke="#7a7aea" stroke-width="0.8"/>
<line x1="156.4" y1="220.4" x2="156.4" y2="237.4" stroke="#8acb8a" stroke-width="1.05" vector-effect="non-scaling-stroke" />
<text x="157.9" y="197.5" font-size="2.2" fill="#202020" text-anchor="start" >1</text>
<text x="157.9" y="217.5" font-size="2.2" fill="#202020" text-anchor="start" >2</text>
<line x1="178.6" y1="199.5" x2="178.6" y2="214.5" stroke="#7a7aea" stroke-width="1" vector-effect="non-scaling-stroke" />
<circle cx="178.6" cy="198" r="1.4" fill="none" stroke="#7a7aea" stroke-width="0.8"/>
<circle cx="178.6" cy="216" r="1.4" fill="none" stroke="#7a7aea" stroke-width="0.8"/>
<line x1="178.6" y1="220.4" x2="178.6" y2="237.4" stroke="#8acb8a" stroke-width="1.05" vector-effect="non-scaling-stroke" />
<text x="180.1" y="197.5" font-size="2.2" fill="#202020" text-anchor="start" >3</text>
<text x="180.1" y="217.5" font-size="2.2" fill="#202020" text-anchor="start" >4</text>
<text x="146" y="199.2" font-size="4.0" fill="#2c2cd8" text-anchor="end" font-weight="bold">-K12</text>
<text x="145.5" y="203" font-size="3" fill="#202020" text-anchor="end" >Line</text>
<text x="148.8" y="207.5" font-size="2.4" fill="#202020" text-anchor="start" >x0</text>
<text x="146" y="242.5" font-size="4.0" fill="#2c2cd8" text-anchor="end" font-weight="bold">-K7</text>
<text x="146" y="246.3" font-size="3.2" fill="#202020" text-anchor="end" >Controller</text>
<text x="148.8" y="251" font-size="2.4" fill="#202020" text-anchor="start" >x0</text>
<line x1="187" y1="237.4" x2="187" y2="263.6" stroke="#82c0b8" stroke-width="1.2" vector-effect="non-scaling-stroke" />
<rect x="195.6" y="237.4" width="161.79999999999998" height="11.199999999999989" stroke="#82c0b8" stroke-width="1.0" fill="none" vector-effect="non-scaling-stroke"/>
<rect x="379" y="237.4" width="135.39999999999998" height="11.199999999999989" stroke="#82c0b8" stroke-width="1.0" fill="none" vector-effect="non-scaling-stroke"/>
<rect x="195.6" y="253" width="30.80000000000001" height="10.600000000000023" stroke="#82c0b8" stroke-width="1.0" fill="none" vector-effect="non-scaling-stroke"/>
<rect x="239.4" y="250.6" width="26.599999999999994" height="13.000000000000028" stroke="#82c0b8" stroke-width="1.0" fill="none" vector-effect="non-scaling-stroke"/>
<rect x="326" y="253" width="83.39999999999998" height="10.600000000000023" stroke="#82c0b8" stroke-width="1.0" fill="none" vector-effect="non-scaling-stroke"/>
<rect x="483.6" y="253" width="30.799999999999955" height="10.600000000000023" stroke="#82c0b8" stroke-width="1.0" fill="none" vector-effect="non-scaling-stroke"/>
<rect x="147.6" y="237.4" width="371.0" height="26.200000000000017" stroke="#7a7aea" stroke-width="1.05" fill="none" vector-effect="non-scaling-stroke"/>
<line x1="156.4" y1="243.5" x2="156.4" y2="257.5" stroke="#7a7aea" stroke-width="1" vector-effect="non-scaling-stroke" />
<line x1="178.6" y1="243.5" x2="178.6" y2="257.5" stroke="#7a7aea" stroke-width="1" vector-effect="non-scaling-stroke" />
<text x="168" y="250.3" font-size="2.8" fill="#202020" text-anchor="middle" >Auxiliary supply</text>
<text x="168" y="253.8" font-size="2.8" fill="#202020" text-anchor="middle" >(AW 20)</text>
<text x="253" y="252.8" font-size="2.6" fill="#202020" text-anchor="middle" >Remote ready</text>
<polyline points="247.5,261 248.8,255.5 256,255.5 254.5,258.5 258,261" fill="none" stroke="#f0a848" stroke-width="1.1" vector-effect="non-scaling-stroke" />
<circle cx="156.4" cy="241.8" r="1.4" fill="none" stroke="#7a7aea" stroke-width="0.8"/>
<line x1="156.4" y1="237.4" x2="156.4" y2="240.4" stroke="#7a7aea" stroke-width="0.9" vector-effect="non-scaling-stroke" />
<circle cx="178.6" cy="241.8" r="1.4" fill="none" stroke="#7a7aea" stroke-width="0.8"/>
<line x1="178.6" y1="237.4" x2="178.6" y2="240.4" stroke="#7a7aea" stroke-width="0.9" vector-effect="non-scaling-stroke" />
<circle cx="200.4" cy="241.8" r="1.4" fill="none" stroke="#7a7aea" stroke-width="0.8"/>
<line x1="200.4" y1="237.4" x2="200.4" y2="240.4" stroke="#7a7aea" stroke-width="0.9" vector-effect="non-scaling-stroke" />
<circle cx="222" cy="241.8" r="1.4" fill="none" stroke="#7a7aea" stroke-width="0.8"/>
<line x1="222" y1="237.4" x2="222" y2="240.4" stroke="#7a7aea" stroke-width="0.9" vector-effect="non-scaling-stroke" />
<circle cx="243.6" cy="241.8" r="1.4" fill="none" stroke="#7a7aea" stroke-width="0.8"/>
<line x1="243.6" y1="237.4" x2="243.6" y2="240.4" stroke="#7a7aea" stroke-width="0.9" vector-effect="non-scaling-stroke" />
<circle cx="265" cy="241.8" r="1.4" fill="none" stroke="#7a7aea" stroke-width="0.8"/>
<line x1="265" y1="237.4" x2="265" y2="240.4" stroke="#7a7aea" stroke-width="0.9" vector-effect="non-scaling-stroke" />
<circle cx="287.4" cy="241.8" r="1.4" fill="none" stroke="#7a7aea" stroke-width="0.8"/>
<line x1="287.4" y1="237.4" x2="287.4" y2="240.4" stroke="#7a7aea" stroke-width="0.9" vector-effect="non-scaling-stroke" />
<circle cx="309.4" cy="241.8" r="1.4" fill="none" stroke="#7a7aea" stroke-width="0.8"/>
<line x1="309.4" y1="237.4" x2="309.4" y2="240.4" stroke="#7a7aea" stroke-width="0.9" vector-effect="non-scaling-stroke" />
<circle cx="331" cy="241.8" r="1.4" fill="none" stroke="#7a7aea" stroke-width="0.8"/>
<line x1="331" y1="237.4" x2="331" y2="240.4" stroke="#7a7aea" stroke-width="0.9" vector-effect="non-scaling-stroke" />
<circle cx="353" cy="241.8" r="1.4" fill="none" stroke="#7a7aea" stroke-width="0.8"/>
<line x1="353" y1="237.4" x2="353" y2="240.4" stroke="#7a7aea" stroke-width="0.9" vector-effect="non-scaling-stroke" />
<circle cx="383.4" cy="241.8" r="1.4" fill="none" stroke="#7a7aea" stroke-width="0.8"/>
<line x1="383.4" y1="237.4" x2="383.4" y2="240.4" stroke="#7a7aea" stroke-width="0.9" vector-effect="non-scaling-stroke" />
<circle cx="405" cy="241.8" r="1.4" fill="none" stroke="#7a7aea" stroke-width="0.8"/>
<line x1="405" y1="237.4" x2="405" y2="240.4" stroke="#7a7aea" stroke-width="0.9" vector-effect="non-scaling-stroke" />
<circle cx="435.4" cy="241.8" r="1.4" fill="none" stroke="#7a7aea" stroke-width="0.8"/>
<line x1="435.4" y1="237.4" x2="435.4" y2="240.4" stroke="#7a7aea" stroke-width="0.9" vector-effect="non-scaling-stroke" />
<circle cx="457.4" cy="241.8" r="1.4" fill="none" stroke="#7a7aea" stroke-width="0.8"/>
<line x1="457.4" y1="237.4" x2="457.4" y2="240.4" stroke="#7a7aea" stroke-width="0.9" vector-effect="non-scaling-stroke" />
<circle cx="488" cy="241.8" r="1.4" fill="none" stroke="#7a7aea" stroke-width="0.8"/>
<line x1="488" y1="237.4" x2="488" y2="240.4" stroke="#7a7aea" stroke-width="0.9" vector-effect="non-scaling-stroke" />
<circle cx="510" cy="241.8" r="1.4" fill="none" stroke="#7a7aea" stroke-width="0.8"/>
<line x1="510" y1="237.4" x2="510" y2="240.4" stroke="#7a7aea" stroke-width="0.9" vector-effect="non-scaling-stroke" />
<circle cx="156.4" cy="259.2" r="1.4" fill="none" stroke="#7a7aea" stroke-width="0.8"/>
<line x1="156.4" y1="260.6" x2="156.4" y2="263.6" stroke="#7a7aea" stroke-width="0.9" vector-effect="non-scaling-stroke" />
<circle cx="178.6" cy="259.2" r="1.4" fill="none" stroke="#7a7aea" stroke-width="0.8"/>
<line x1="178.6" y1="260.6" x2="178.6" y2="263.6" stroke="#7a7aea" stroke-width="0.9" vector-effect="non-scaling-stroke" />
<circle cx="200.4" cy="259.2" r="1.4" fill="none" stroke="#7a7aea" stroke-width="0.8"/>
<line x1="200.4" y1="260.6" x2="200.4" y2="263.6" stroke="#7a7aea" stroke-width="0.9" vector-effect="non-scaling-stroke" />
<circle cx="222" cy="259.2" r="1.4" fill="none" stroke="#7a7aea" stroke-width="0.8"/>
<line x1="222" y1="260.6" x2="222" y2="263.6" stroke="#7a7aea" stroke-width="0.9" vector-effect="non-scaling-stroke" />
<circle cx="248.8" cy="259.2" r="1.4" fill="none" stroke="#7a7aea" stroke-width="0.8"/>
<line x1="248.8" y1="260.6" x2="248.8" y2="263.6" stroke="#7a7aea" stroke-width="0.9" vector-effect="non-scaling-stroke" />
<circle cx="256.8" cy="259.2" r="1.4" fill="none" stroke="#7a7aea" stroke-width="0.8"/>
<line x1="256.8" y1="260.6" x2="256.8" y2="263.6" stroke="#7a7aea" stroke-width="0.9" vector-effect="non-scaling-stroke" />
<circle cx="331" cy="259.2" r="1.4" fill="none" stroke="#7a7aea" stroke-width="0.8"/>
<line x1="331" y1="260.6" x2="331" y2="263.6" stroke="#7a7aea" stroke-width="0.9" vector-effect="non-scaling-stroke" />
<circle cx="353" cy="259.2" r="1.4" fill="none" stroke="#7a7aea" stroke-width="0.8"/>
<line x1="353" y1="260.6" x2="353" y2="263.6" stroke="#7a7aea" stroke-width="0.9" vector-effect="non-scaling-stroke" />
<circle cx="383.4" cy="259.2" r="1.4" fill="none" stroke="#7a7aea" stroke-width="0.8"/>
<line x1="383.4" y1="260.6" x2="383.4" y2="263.6" stroke="#7a7aea" stroke-width="0.9" vector-effect="non-scaling-stroke" />
<circle cx="405" cy="259.2" r="1.4" fill="none" stroke="#7a7aea" stroke-width="0.8"/>
<line x1="405" y1="260.6" x2="405" y2="263.6" stroke="#7a7aea" stroke-width="0.9" vector-effect="non-scaling-stroke" />
<circle cx="488" cy="259.2" r="1.4" fill="none" stroke="#7a7aea" stroke-width="0.8"/>
<line x1="488" y1="260.6" x2="488" y2="263.6" stroke="#7a7aea" stroke-width="0.9" vector-effect="non-scaling-stroke" />
<circle cx="510" cy="259.2" r="1.4" fill="none" stroke="#7a7aea" stroke-width="0.8"/>
<line x1="510" y1="260.6" x2="510" y2="263.6" stroke="#7a7aea" stroke-width="0.9" vector-effect="non-scaling-stroke" />
<line x1="155.20000000000002" y1="182.5" x2="157.6" y2="185.5" stroke="#e87838" stroke-width="0.9" vector-effect="non-scaling-stroke" />
<text x="157.9" y="184" font-size="2.6" fill="#2c2cd8" text-anchor="start" >Wx</text>
<line x1="177.4" y1="182.5" x2="179.79999999999998" y2="185.5" stroke="#e87838" stroke-width="0.9" vector-effect="non-scaling-stroke" />
<text x="180.1" y="184" font-size="2.6" fill="#2c2cd8" text-anchor="start" >Wx</text>
<line x1="155.20000000000002" y1="226.3" x2="157.6" y2="229.3" stroke="#e87838" stroke-width="0.9" vector-effect="non-scaling-stroke" />
<text x="157.9" y="227.8" font-size="2.6" fill="#2c2cd8" text-anchor="start" >Wx</text>
<line x1="177.4" y1="226.3" x2="179.79999999999998" y2="229.3" stroke="#e87838" stroke-width="0.9" vector-effect="non-scaling-stroke" />
<text x="180.1" y="227.8" font-size="2.6" fill="#2c2cd8" text-anchor="start" >Wx</text>
<line x1="199.20000000000002" y1="226.3" x2="201.6" y2="229.3" stroke="#e87838" stroke-width="0.9" vector-effect="non-scaling-stroke" />
<text x="201.9" y="227.8" font-size="2.6" fill="#2c2cd8" text-anchor="start" >Wx</text>
<line x1="220.8" y1="226.3" x2="223.2" y2="229.3" stroke="#e87838" stroke-width="0.9" vector-effect="non-scaling-stroke" />
<text x="223.5" y="227.8" font-size="2.6" fill="#2c2cd8" text-anchor="start" >Wx</text>
<line x1="242.4" y1="226.3" x2="244.79999999999998" y2="229.3" stroke="#e87838" stroke-width="0.9" vector-effect="non-scaling-stroke" />
<text x="245.1" y="227.8" font-size="2.6" fill="#2c2cd8" text-anchor="start" >Wx</text>
<line x1="263.8" y1="226.3" x2="266.2" y2="229.3" stroke="#e87838" stroke-width="0.9" vector-effect="non-scaling-stroke" />
<text x="266.5" y="227.8" font-size="2.6" fill="#2c2cd8" text-anchor="start" >Wx</text>
<line x1="286.2" y1="226.3" x2="288.59999999999997" y2="229.3" stroke="#e87838" stroke-width="0.9" vector-effect="non-scaling-stroke" />
<text x="288.9" y="227.8" font-size="2.6" fill="#2c2cd8" text-anchor="start" >Wx</text>
<line x1="308.2" y1="226.3" x2="310.59999999999997" y2="229.3" stroke="#e87838" stroke-width="0.9" vector-effect="non-scaling-stroke" />
<text x="310.9" y="227.8" font-size="2.6" fill="#2c2cd8" text-anchor="start" >Wx</text>
<line x1="329.8" y1="226.3" x2="332.2" y2="229.3" stroke="#e87838" stroke-width="0.9" vector-effect="non-scaling-stroke" />
<text x="332.5" y="227.8" font-size="2.6" fill="#2c2cd8" text-anchor="start" >Wx</text>
<line x1="351.8" y1="226.3" x2="354.2" y2="229.3" stroke="#e87838" stroke-width="0.9" vector-effect="non-scaling-stroke" />
<text x="354.5" y="227.8" font-size="2.6" fill="#2c2cd8" text-anchor="start" >Wx</text>
<line x1="382.2" y1="226.3" x2="384.59999999999997" y2="229.3" stroke="#e87838" stroke-width="0.9" vector-effect="non-scaling-stroke" />
<text x="384.9" y="227.8" font-size="2.6" fill="#2c2cd8" text-anchor="start" >Wx</text>
<line x1="403.8" y1="226.3" x2="406.2" y2="229.3" stroke="#e87838" stroke-width="0.9" vector-effect="non-scaling-stroke" />
<text x="406.5" y="227.8" font-size="2.6" fill="#2c2cd8" text-anchor="start" >Wx</text>
<line x1="434.2" y1="226.3" x2="436.59999999999997" y2="229.3" stroke="#e87838" stroke-width="0.9" vector-effect="non-scaling-stroke" />
<text x="436.9" y="227.8" font-size="2.6" fill="#2c2cd8" text-anchor="start" >Wx</text>
<line x1="456.2" y1="226.3" x2="458.59999999999997" y2="229.3" stroke="#e87838" stroke-width="0.9" vector-effect="non-scaling-stroke" />
<text x="458.9" y="227.8" font-size="2.6" fill="#2c2cd8" text-anchor="start" >Wx</text>
<line x1="486.8" y1="226.3" x2="489.2" y2="229.3" stroke="#e87838" stroke-width="0.9" vector-effect="non-scaling-stroke" />
<text x="489.5" y="227.8" font-size="2.6" fill="#2c2cd8" text-anchor="start" >Wx</text>
<line x1="508.8" y1="226.3" x2="511.2" y2="229.3" stroke="#e87838" stroke-width="0.9" vector-effect="non-scaling-stroke" />
<text x="511.5" y="227.8" font-size="2.6" fill="#2c2cd8" text-anchor="start" >Wx</text>
<line x1="525.8" y1="226.3" x2="528.2" y2="229.3" stroke="#e87838" stroke-width="0.9" vector-effect="non-scaling-stroke" />
<text x="528.5" y="227.8" font-size="2.6" fill="#2c2cd8" text-anchor="start" >Wx</text>
<line x1="543.8" y1="226.3" x2="546.2" y2="229.3" stroke="#e87838" stroke-width="0.9" vector-effect="non-scaling-stroke" />
<text x="546.5" y="227.8" font-size="2.6" fill="#2c2cd8" text-anchor="start" >Wx</text>
<path d="M191.5,228 l5,-2 l-1.5,4.5 z M193,230 l1,2.5" fill="#2c2cd8" stroke="#2c2cd8" stroke-width="0.8"/>
<polyline points="200.4,263.6 200.4,276 201.4,277.5" fill="none" stroke="#e07878" stroke-width="1.1" vector-effect="non-scaling-stroke" />
<line x1="199.20000000000002" y1="269.5" x2="201.6" y2="272.5" stroke="#e87838" stroke-width="0.9" vector-effect="non-scaling-stroke" />
<text x="201.9" y="271" font-size="2.6" fill="#2c2cd8" text-anchor="start" >Wx</text>
<polyline points="222,263.6 222,276 223,277.5" fill="none" stroke="#e07878" stroke-width="1.1" vector-effect="non-scaling-stroke" />
<line x1="220.8" y1="269.5" x2="223.2" y2="272.5" stroke="#e87838" stroke-width="0.9" vector-effect="non-scaling-stroke" />
<text x="223.5" y="271" font-size="2.6" fill="#2c2cd8" text-anchor="start" >Wx</text>
<polyline points="248.8,263.6 248.8,275.5 243.6,277.5 243.6,295" fill="none" stroke="#8acb8a" stroke-width="1.05" vector-effect="non-scaling-stroke" />
<line x1="247.60000000000002" y1="269.5" x2="250.0" y2="272.5" stroke="#e87838" stroke-width="0.9" vector-effect="non-scaling-stroke" />
<text x="250.3" y="271" font-size="2.6" fill="#2c2cd8" text-anchor="start" >Wx</text>
<polyline points="256.8,263.6 256.8,275.5 261.4,277.5 261.4,295" fill="none" stroke="#8acb8a" stroke-width="1.05" vector-effect="non-scaling-stroke" />
<line x1="255.60000000000002" y1="269.5" x2="258.0" y2="272.5" stroke="#e87838" stroke-width="0.9" vector-effect="non-scaling-stroke" />
<text x="258.3" y="271" font-size="2.6" fill="#2c2cd8" text-anchor="start" >Wx</text>
<line x1="243.6" y1="293" x2="243.6" y2="301" stroke="#7a7aea" stroke-width="1" vector-effect="non-scaling-stroke" />
<rect x="242.4" y="294" width="2.4" height="4.5" fill="#2424e0"/>
<text x="241.1" y="307.5" font-size="3.3" fill="#2c2cd8" text-anchor="end" font-weight="bold">-X1</text>
<line x1="243.6" y1="302" x2="248.6" y2="302" stroke="#7a7aea" stroke-width="0.8" vector-effect="non-scaling-stroke" />
<circle cx="243.6" cy="302" r="0.9" fill="none" stroke="#7a7aea" stroke-width="0.8"/>
<circle cx="248.6" cy="302" r="0.9" fill="none" stroke="#7a7aea" stroke-width="0.8"/>
<line x1="261.4" y1="293" x2="261.4" y2="301" stroke="#7a7aea" stroke-width="1" vector-effect="non-scaling-stroke" />
<rect x="260.2" y="294" width="2.4" height="4.5" fill="#2424e0"/>
<text x="258.9" y="307.5" font-size="3.3" fill="#2c2cd8" text-anchor="end" font-weight="bold">-X1</text>
<line x1="261.4" y1="302" x2="266.4" y2="302" stroke="#7a7aea" stroke-width="0.8" vector-effect="non-scaling-stroke" />
<circle cx="261.4" cy="302" r="0.9" fill="none" stroke="#7a7aea" stroke-width="0.8"/>
<circle cx="266.4" cy="302" r="0.9" fill="none" stroke="#7a7aea" stroke-width="0.8"/>
<line x1="331" y1="263.6" x2="331" y2="355.6" stroke="#8acb8a" stroke-width="1.05" vector-effect="non-scaling-stroke" />
<line x1="329.8" y1="269.5" x2="332.2" y2="272.5" stroke="#e87838" stroke-width="0.9" vector-effect="non-scaling-stroke" />
<text x="332.5" y="271" font-size="2.6" fill="#2c2cd8" text-anchor="start" >Wx</text>
<line x1="353" y1="263.6" x2="353" y2="355.6" stroke="#8acb8a" stroke-width="1.05" vector-effect="non-scaling-stroke" />
<line x1="351.8" y1="269.5" x2="354.2" y2="272.5" stroke="#e87838" stroke-width="0.9" vector-effect="non-scaling-stroke" />
<text x="354.5" y="271" font-size="2.6" fill="#2c2cd8" text-anchor="start" >Wx</text>
<line x1="383.4" y1="263.6" x2="383.4" y2="355.6" stroke="#8acb8a" stroke-width="1.05" vector-effect="non-scaling-stroke" />
<line x1="382.2" y1="269.5" x2="384.59999999999997" y2="272.5" stroke="#e87838" stroke-width="0.9" vector-effect="non-scaling-stroke" />
<text x="384.9" y="271" font-size="2.6" fill="#2c2cd8" text-anchor="start" >Wx</text>
<line x1="405" y1="263.6" x2="405" y2="355.6" stroke="#8acb8a" stroke-width="1.05" vector-effect="non-scaling-stroke" />
<line x1="403.8" y1="269.5" x2="406.2" y2="272.5" stroke="#e87838" stroke-width="0.9" vector-effect="non-scaling-stroke" />
<text x="406.5" y="271" font-size="2.6" fill="#2c2cd8" text-anchor="start" >Wx</text>
<line x1="382.2" y1="314.5" x2="384.59999999999997" y2="317.5" stroke="#e87838" stroke-width="0.9" vector-effect="non-scaling-stroke" />
<text x="384.9" y="316" font-size="2.6" fill="#2c2cd8" text-anchor="start" >Wx</text>
<rect x="381.3" y="283" width="4.2" height="10" fill="#f0f0f0" stroke="#7a7aea" stroke-width="0.9"/>
<line x1="381.3" y1="288" x2="385.5" y2="288" stroke="#7a7aea" stroke-width="0.7" vector-effect="non-scaling-stroke" />
<text x="379" y="289" font-size="3.8" fill="#2c2cd8" text-anchor="end" font-weight="bold">-K9-X1</text>
<text x="377" y="292.8" font-size="3" fill="#202020" text-anchor="end" >Line</text>
<circle cx="383.4" cy="333.6" r="7" fill="#f0f0f0" stroke="#7a7aea" stroke-width="1.1"/>
<text x="383.4" y="333" font-size="3.6" fill="#2c2cd8" text-anchor="middle" font-weight="bold">M</text>
<text x="383.4" y="337.5" font-size="2.2" fill="#2c2cd8" text-anchor="middle" >DC</text>
<text x="375.5" y="335" font-size="3.8" fill="#2c2cd8" text-anchor="end" font-weight="bold">-M1</text>
<text x="374" y="338.3" font-size="2" fill="#d33" text-anchor="end" >/4.1</text>
<text x="376" y="341.5" font-size="3" fill="#202020" text-anchor="end" >24VDC</text>
<text x="376" y="344.9" font-size="3" fill="#202020" text-anchor="end" >spring-charging</text>
<text x="376" y="348.3" font-size="3" fill="#202020" text-anchor="end" >and closing</text>
<text x="376" y="351.7" font-size="3" fill="#202020" text-anchor="end" >motor</text>
<polyline points="331,327 332.8,329 329.2,331 332.8,333 329.2,335 332.8,337 331,339" fill="none" stroke="#7a7aea" stroke-width="0.9" vector-effect="non-scaling-stroke" />
<text x="328" y="335" font-size="4" fill="#2c2cd8" text-anchor="end" font-weight="bold">-Y5</text>
<text x="328" y="339" font-size="3" fill="#202020" text-anchor="end" >blocking</text>
<text x="333" y="328" font-size="2" fill="#202020" text-anchor="start" >0V</text>
<text x="333" y="341" font-size="2" fill="#202020" text-anchor="start" >24</text>
<text x="347.5" y="212" font-size="3.8" fill="#2c2cd8" text-anchor="end" font-weight="bold">-Q2.3</text>
<text x="346" y="214.8" font-size="2" fill="#d33" text-anchor="end" >/4.8</text>
<text x="351" y="218.6" font-size="3.2" fill="#202020" text-anchor="end" >Changeover</text>
<text x="351" y="222.2" font-size="3.2" fill="#202020" text-anchor="end" >switch</text>
<text x="351" y="225.79999999999998" font-size="3.2" fill="#202020" text-anchor="end" >operating</text>
<line x1="351.8" y1="188.5" x2="354.2" y2="191.5" stroke="#e87838" stroke-width="0.9" vector-effect="non-scaling-stroke" />
<text x="354.5" y="190" font-size="2.6" fill="#2c2cd8" text-anchor="start" >Wx</text>
<rect x="118.5" y="372.5" width="457" height="23" fill="#f0f0f0" stroke="#777" stroke-width="1"/>
<rect x="332.5" y="372.5" width="48" height="23" fill="#fdfdfd" stroke="#808080" stroke-width="0.9"/>
<line x1="118.5" y1="377.5" x2="294.5" y2="377.5" stroke="#808080" stroke-width="0.9" vector-effect="non-scaling-stroke" />
<line x1="118.5" y1="381.5" x2="294.5" y2="381.5" stroke="#808080" stroke-width="0.9" vector-effect="non-scaling-stroke" />
<line x1="118.5" y1="386.5" x2="294.5" y2="386.5" stroke="#808080" stroke-width="0.9" vector-effect="non-scaling-stroke" />
<line x1="118.5" y1="391.5" x2="294.5" y2="391.5" stroke="#808080" stroke-width="0.9" vector-effect="non-scaling-stroke" />
<line x1="155.5" y1="372.5" x2="155.5" y2="395.5" stroke="#808080" stroke-width="0.9" vector-effect="non-scaling-stroke" />
<line x1="189.5" y1="372.5" x2="189.5" y2="395.5" stroke="#808080" stroke-width="0.9" vector-effect="non-scaling-stroke" />
<line x1="294.5" y1="372.5" x2="294.5" y2="395.5" stroke="#808080" stroke-width="0.9" vector-effect="non-scaling-stroke" />
<line x1="332.5" y1="372.5" x2="332.5" y2="395.5" stroke="#808080" stroke-width="0.9" vector-effect="non-scaling-stroke" />
<line x1="380.5" y1="372.5" x2="380.5" y2="395.5" stroke="#808080" stroke-width="0.9" vector-effect="non-scaling-stroke" />
<line x1="442.5" y1="372.5" x2="442.5" y2="395.5" stroke="#808080" stroke-width="0.9" vector-effect="non-scaling-stroke" />
<line x1="459.5" y1="372.5" x2="459.5" y2="395.5" stroke="#808080" stroke-width="0.9" vector-effect="non-scaling-stroke" />
<line x1="522.5" y1="372.5" x2="522.5" y2="395.5" stroke="#808080" stroke-width="0.9" vector-effect="non-scaling-stroke" />
<line x1="553.5" y1="372.5" x2="553.5" y2="395.5" stroke="#808080" stroke-width="0.9" vector-effect="non-scaling-stroke" />
<line x1="125.5" y1="377.5" x2="125.5" y2="395.5" stroke="#808080" stroke-width="0.9" vector-effect="non-scaling-stroke" />
<line x1="145.5" y1="377.5" x2="145.5" y2="395.5" stroke="#808080" stroke-width="0.9" vector-effect="non-scaling-stroke" />
<line x1="170.5" y1="377.5" x2="170.5" y2="395.5" stroke="#808080" stroke-width="0.9" vector-effect="non-scaling-stroke" />
<line x1="226.5" y1="377.5" x2="226.5" y2="395.5" stroke="#808080" stroke-width="0.9" vector-effect="non-scaling-stroke" />
<line x1="380.5" y1="377.5" x2="553.5" y2="377.5" stroke="#808080" stroke-width="0.9" vector-effect="non-scaling-stroke" />
<line x1="442.5" y1="384.5" x2="553.5" y2="384.5" stroke="#808080" stroke-width="0.9" vector-effect="non-scaling-stroke" />
<line x1="442.5" y1="390.5" x2="553.5" y2="390.5" stroke="#808080" stroke-width="0.9" vector-effect="non-scaling-stroke" />
<line x1="553.5" y1="383.5" x2="575.5" y2="383.5" stroke="#808080" stroke-width="0.9" vector-effect="non-scaling-stroke" />
<text x="119" y="376.3" font-size="3.3" fill="#202020" text-anchor="start" >Status</text>
<text x="156.5" y="376.3" font-size="3.3" fill="#202020" text-anchor="start" >Creation data</text>
<text x="190.5" y="376.3" font-size="3.3" fill="#202020" text-anchor="start" >Project data</text>
<text x="119" y="381" font-size="3.3" fill="#202020" text-anchor="start" >Rev.</text>
<text x="126.5" y="381" font-size="3.3" fill="#202020" text-anchor="start" >Date</text>
<text x="146.5" y="381" font-size="3.3" fill="#202020" text-anchor="start" >Name</text>
<text x="156.5" y="381" font-size="3.3" fill="#202020" text-anchor="start" >Date</text>
<text x="171" y="381" font-size="3.2" fill="#202020" text-anchor="start" >20.11.2025</text>
<text x="190.5" y="381" font-size="3.3" fill="#202020" text-anchor="start" >Customer</text>
<text x="227.5" y="381" font-size="3.3" fill="#202020" text-anchor="start" >Eaton_Eplan Live Event</text>
<text x="156.5" y="385.8" font-size="3.3" fill="#202020" text-anchor="start" >Drw.</text>
<text x="171.5" y="385.8" font-size="3.3" fill="#202020" text-anchor="start" >EBS</text>
<text x="190.5" y="385.8" font-size="3.3" fill="#202020" text-anchor="start" >Name of switchgear</text>
<text x="227.5" y="385.8" font-size="3.3" fill="#202020" text-anchor="start" >Eaton_Eplan Live Event</text>
<text x="156.5" y="390.6" font-size="3.3" fill="#202020" text-anchor="start" >Check.</text>
<text x="171.5" y="390.6" font-size="3.3" fill="#202020" text-anchor="start" >ESN</text>
<text x="190.5" y="390.6" font-size="3.3" fill="#202020" text-anchor="start" >Project number</text>
<text x="227.5" y="390.6" font-size="3.3" fill="#202020" text-anchor="start" >TTTTTTTT-24kV</text>
<text x="156.5" y="395" font-size="3.3" fill="#202020" text-anchor="start" >Appr.</text>
<text x="171.5" y="395" font-size="3.3" fill="#202020" text-anchor="start" >SSB</text>
<text x="190.5" y="395" font-size="3.3" fill="#202020" text-anchor="start" >Drawing number</text>
<text x="119" y="398.8" font-size="3.3" fill="#202020" text-anchor="start" >DAT rights reserved</text>
<path d="M119.5,370 l1,-2.5 h3 l-1,2.5 z" fill="none" stroke="#444" stroke-width="0.6"/>
<text x="124" y="370.2" font-size="3.3" fill="#202020" text-anchor="start" >2</text>
<path d="M337.7,378 h5.4 v1.7 h-3.4 v1.4 h3 v1.6 h-3 v1.3 h3.5 v1.7 h-5.5 z" fill="#1b5fb6"/>
<path d="M343.9,385.7 L347.2,378 H349.7 V385.7 H347.6 V384 H346.4 L345.9,385.7 z" fill="#1b5fb6"/>
<path d="M350.2,378 h5.4 v1.8 h-1.7 v5.9 h-2 v-5.9 h-1.7 z" fill="#1b5fb6"/>
<circle cx="357" cy="381.9" r="1.3" fill="#1b5fb6"/>
<path d="M359.2,378 h2 l2.1,4 v-4 h2 v7.7 h-2 l-2.1,-4 v4 h-2 z" fill="#1b5fb6"/>
<text x="343.5" y="389.6" font-size="2.2" fill="#555" text-anchor="start" font-style="italic" textLength="31" lengthAdjust="spacingAndGlyphs">Powering Business Worldwide</text>
<text x="381.5" y="376.6" font-size="3.3" fill="#202020" text-anchor="start" >Page description</text>
<text x="395" y="387.4" font-size="3.6" fill="#202020" text-anchor="start" >Motor closing circuit</text>
<text x="443.5" y="376.6" font-size="3.3" fill="#202020" text-anchor="start" >Code</text>
<text x="461" y="376.6" font-size="3.3" fill="#202020" text-anchor="start" >System data</text>
<text x="523.5" y="376.6" font-size="3.3" fill="#202020" text-anchor="start" >Location data</text>
<text x="554.5" y="376.4" font-size="3.3" fill="#202020" text-anchor="start" >Sheet</text>
<text x="443.5" y="382.6" font-size="3.3" fill="#202020" text-anchor="start" >CBS</text>
<text x="461" y="382.6" font-size="3.3" fill="#202020" text-anchor="start" >Circuit breaker system</text>
<text x="523.5" y="382.6" font-size="3.3" fill="#202020" text-anchor="start" >Panel 1</text>
<text x="563" y="381.2" font-size="3.3" fill="#202020" text-anchor="start" >3</text>
<text x="443.5" y="394.5" font-size="3.3" fill="#202020" text-anchor="start" >Inst. type</text>
<text x="461" y="394.5" font-size="3.3" fill="#202020" text-anchor="start" >Xiria family</text>
<text x="554.5" y="387.5" font-size="3.3" fill="#202020" text-anchor="start" >Page</text>
<text x="559" y="392" font-size="3.3" fill="#202020" text-anchor="start" >15 /160</text>
<path d="M566.5,368 l2,-1.5 h5 l-1,3 h-5 z" fill="none" stroke="#555" stroke-width="0.8"/></g><svg x="5" y="336" width="103.2" height="72.4" viewBox="118 74 457.6 321" preserveAspectRatio="none"><use href="#sch"/></svg></svg><svg width="750" height="421" viewBox="0 0 750 421"><path d="M702.5,6.3 h4.5" stroke="#ddd" stroke-width="0.8"/><rect x="720" y="4.5" width="3.6" height="3.6" fill="none" stroke="#ddd" stroke-width="0.8"/><path d="M721,4.2 v-0.8 h3.8 v3.8 h-0.8" fill="none" stroke="#ddd" stroke-width="0.7"/><path d="M738,4 l4,4 M742,4 l-4,4" fill="none" stroke="#e6e6e6" stroke-width="0.9"/><path d="M741.8,59 l1.5,-1.5 l1.5,1.5" fill="none" stroke="#ccc" stroke-width="0.7"/><path d="M92.4,66.5 h3.6 l-1.8,2 z" fill="#ddd"/><path d="M100.6,65.2 h2 v2.6 h0.8 v0.6 h-3.6 v-0.6 h0.8 z M101.6,68.4 v1.6" fill="#bbb" stroke="#bbb" stroke-width="0.4"/><path d="M107.2,65.80000000000001 l3.2,3.2 M110.39999999999999,65.80000000000001 l-3.2,3.2" fill="none" stroke="#ddd" stroke-width="0.8"/><path d="M303.4,65.4 l3.2,3.2 M306.6,65.4 l-3.2,3.2" fill="none" stroke="#ddd" stroke-width="0.8"/><path d="M743.2,66.3 l1.5,1.5 l1.5,-1.5" fill="none" stroke="#ddd" stroke-width="0.8"/><path d="M91.7,86.6 h3.6 l-1.8,2 z" fill="#ccc"/><path d="M104.5,89.8 h3.5" stroke="#ccc" stroke-width="0.7"/><path d="M106,118 l1.5,-1.8 l1.5,1.8 z" fill="#ccc"/><path d="M106,302.5 l1.5,1.8 l1.5,-1.8 z" fill="#999"/><path d="M100.5,307 l1.8,1.5 l-1.8,1.5 z" fill="#bbb"/><path d="M7,307 l-1.8,1.5 l1.8,1.5 z" fill="#ccc"/><path d="M92.4,328.90000000000003 h3.6 l-1.8,2 z" fill="#ddd"/><path d="M100.6,327.6 h2 v2.6 h0.8 v0.6 h-3.6 v-0.6 h0.8 z M101.6,330.8 v1.6" fill="#bbb" stroke="#bbb" stroke-width="0.4"/><path d="M107.2,328.2 l3.2,3.2 M110.39999999999999,328.2 l-3.2,3.2" fill="none" stroke="#ddd" stroke-width="0.8"/><path d="M734.2,79.1 h3.6 l-1.8,2 z" fill="#eee"/><path d="M742.5,77.3 h2 v2.6 h0.8 v0.6 h-3.6 v-0.6 h0.8 z M743.5,80.5 v1.6" fill="#ccc" stroke="#ccc" stroke-width="0.4"/><path d="M742.5,90.5 h3.5" stroke="#ccc" stroke-width="0.7"/><path d="M46.8,47.2 l1.2,1.1 l1.2,-1.1" fill="none" stroke="#aaa" stroke-width="0.6"/><path d="M153.3,47.2 l1.2,1.1 l1.2,-1.1" fill="none" stroke="#aaa" stroke-width="0.6"/><path d="M284.3,29.6 l1.2,1.1 l1.2,-1.1" fill="none" stroke="#aaa" stroke-width="0.6"/><path d="M284.8,47.2 l1.2,1.1 l1.2,-1.1" fill="none" stroke="#aaa" stroke-width="0.6"/><path d="M385.3,29.6 l1.2,1.1 l1.2,-1.1" fill="none" stroke="#aaa" stroke-width="0.6"/><path d="M421.3,47.2 l1.2,1.1 l1.2,-1.1" fill="none" stroke="#aaa" stroke-width="0.6"/><path d="M6.5,8.5 L7.5,7.8 V2.5 H10 L11.5,4 V7.8 H7.5" fill="none" stroke="#e8e8e8" stroke-width="1"/><path d="M15.5,2.5 H18 L19.5,4 V8 H15.5 Z M19.5,8 L20.5,8.5" fill="none" stroke="#e8e8e8" stroke-width="1.1"/><path d="M26,4 Q28.5,2 30.5,4.5" fill="none" stroke="#e8e8e8" stroke-width="1.1"/><circle cx="25.7" cy="7" r="1" fill="#e8e8e8"/><circle cx="25.7" cy="3.3" r="0.6" fill="#e8e8e8"/><path d="M34.5,3.5 Q37,1.8 40,3.5" fill="none" stroke="#e8e8e8" stroke-width="1.1"/><circle cx="34.5" cy="3.5" r="0.6" fill="#e8e8e8"/><path d="M43.5,4 Q46,1.8 48.5,3.5" fill="none" stroke="#e8e8e8" stroke-width="1.1"/><circle cx="48.5" cy="3.5" r="0.6" fill="#e8e8e8"/><path d="M52.5,4 Q55,2 57.5,4" fill="none" stroke="#e8e8e8" stroke-width="1.1"/><circle cx="57.5" cy="7" r="1" fill="#e8e8e8"/><rect x="61.5" y="2.5" width="5.5" height="5.5" fill="none" stroke="#bbb" stroke-width="0.7"/><path d="M62.5,3.5 l3.5,3.5 M66,3.5 l-3.5,3.5" fill="none" stroke="#bbb" stroke-width="0.5"/><path d="M71.5,5 l1,1 l1,-1" fill="none" stroke="#ccc" stroke-width="0.6"/><path d="M7,28.5 H6 V37 H12" fill="none" stroke="#e8e8e8" stroke-width="1"/><path d="M13,28.5 H14.8 V31" fill="none" stroke="#e8e8e8" stroke-width="1"/><rect x="8.8" y="27.3" width="3.6" height="1.8" fill="#e8e8e8"/><rect x="12.3" y="31.6" width="6" height="6.2" fill="#222" stroke="#2a95d8" stroke-width="1.1"/><path d="M25.5,27.5 L29.5,32.5 M29.5,27.5 L25.5,32.5" fill="none" stroke="#e8e8e8" stroke-width="1.1"/><circle cx="25.8" cy="33" r="0.9" fill="#2a95d8"/><circle cx="29.2" cy="33" r="0.9" fill="#2a95d8"/><path d="M25,41 V35.5 H28" fill="none" stroke="#ccc" stroke-width="0.8"/><rect x="26.5" y="37" width="4.5" height="4.5" fill="#2a95d8"/><path d="M25.3,45 H30.2 M25.8,45.5 V51 H29.7 V45.5 M26.7,44.5 H28.8" fill="none" stroke="#bbb" stroke-width="0.8"/><path d="M46,32 l3,-3 M47,28.5 l2,2" fill="none" stroke="#666" stroke-width="0.9"/><path d="M46,41 l3,-3" fill="none" stroke="#666" stroke-width="0.9"/><path d="M98,27.5 H102.5 L104.5,29.5 V35 H98 Z" fill="none" stroke="#e8e8e8" stroke-width="0.9"/><path d="M100.5,35 V38 H109 M100.5,36.5 H109" fill="none" stroke="#e8e8e8" stroke-width="0.7"/><circle cx="109" cy="35.5" r="0.9" fill="#e8e8e8"/><circle cx="109" cy="38" r="0.9" fill="#e8e8e8"/><path d="M119.5,27.5 H122 L123.5,29 V32.5 H119.5 Z" fill="none" stroke="#ccc" stroke-width="0.8"/><path d="M123,31 l2,2" fill="none" stroke="#2a95d8" stroke-width="1.2"/><path d="M120.5,42 V36 Q122.5,34.5 124.5,36 V42" fill="none" stroke="#ccc" stroke-width="0.8"/><path d="M121.5,41.5 H123.5" fill="none" stroke="#ccc" stroke-width="0.6"/><rect x="119" y="44" width="2" height="2" fill="#d33"/><rect x="123" y="44" width="2" height="2" fill="#2a95d8"/><rect x="119" y="48" width="2" height="2" fill="#2a95d8"/><path d="M122,46.5 H125 L126,47.5 V51 H122 Z" fill="none" stroke="#ccc" stroke-width="0.7"/><circle cx="170" cy="30.5" r="3.5" fill="none" stroke="#e8e8e8" stroke-width="0.9"/><path d="M166.5,30 l3.5,1.5 l3.5,-1.5 M170,31.5 v3.5" fill="none" stroke="#e8e8e8" stroke-width="0.6"/><path d="M170,34 V38.5 H176.5 M170,36 H176.5" fill="none" stroke="#e8e8e8" stroke-width="0.7"/><circle cx="176.5" cy="36" r="0.9" fill="#e8e8e8"/><circle cx="176.5" cy="38.5" r="0.9" fill="#e8e8e8"/><circle cx="189.5" cy="29.5" r="2" fill="none" stroke="#ccc" stroke-width="0.8"/><path d="M191,31 l2,2" fill="none" stroke="#2a95d8" stroke-width="1.2"/><rect x="189.5" y="35" width="2.5" height="6.5" fill="none" stroke="#666" stroke-width="0.7"/><path d="M234.5,33 Q240.5,27 246.5,33 Q240.5,39 234.5,33 Z" fill="none" stroke="#e8e8e8" stroke-width="0.9"/><circle cx="240.5" cy="33" r="1.6" fill="none" stroke="#e8e8e8" stroke-width="1.1"/><path d="M264,28 H270 M267,28 V33.5 M265.8,33.5 H268.2" fill="none" stroke="#e8e8e8" stroke-width="1"/><rect x="263.8" y="35.5" width="0.9" height="6" fill="#2a95d8"/><rect x="269.5" y="35.5" width="0.9" height="6" fill="#2a95d8"/><path d="M265.5,36.5 H268.5 M267,36.5 V41" fill="none" stroke="#e8e8e8" stroke-width="1.1"/><path d="M267,44 V51 M263.5,47.5 H270.5" fill="none" stroke="#e8e8e8" stroke-width="1.1"/><path d="M266,45 l1,-1 l1,1 M266,50 l1,1 l1,-1 M264.5,46.5 l-1,1 l1,1 M269.5,46.5 l1,1 l-1,1" fill="none" stroke="#e8e8e8" stroke-width="0.6"/><path d="M316.5,27.5 H320 L322,29.5 V34 H316.5 Z" fill="none" stroke="#777" stroke-width="0.8"/><path d="M316.5,35.5 H320 L322,37.5 V42 H316.5 Z" fill="none" stroke="#e8e8e8" stroke-width="1.1"/><circle cx="320.5" cy="40.5" r="1.3" fill="#3a3"/><rect x="316.5" y="44.5" width="5.5" height="6.5" fill="#555"/><circle cx="369.5" cy="29.5" r="2.3" fill="none" stroke="#2a95d8" stroke-width="0.9"/><path d="M371.2,31.2 l2.3,2.3" fill="none" stroke="#e8e8e8" stroke-width="0.9"/><rect x="367" y="35" width="6" height="6.5" fill="none" stroke="#bbb" stroke-width="0.7"/><path d="M368,37 H372 M368,38.5 H372" fill="none" stroke="#bbb" stroke-width="0.5"/><circle cx="372" cy="40.5" r="1.2" fill="#2a95d8"/><path d="M367.5,47 Q368,44 371.5,44.5 M373,48.5 Q372.5,51.5 369,51" fill="none" stroke="#e8e8e8" stroke-width="1.1"/><circle cx="419" cy="17.8" r="1.6" fill="none" stroke="#aaa" stroke-width="0.7"/><path d="M418,19 l-1.2,1.5" fill="none" stroke="#aaa" stroke-width="0.7"/><rect x="740.5" y="15" width="7" height="7.5" fill="#e6e6e6"/><circle cx="744" cy="17.5" r="1.5" fill="#444"/><path d="M741.5,22 Q744,18.5 746.5,22" fill="#444"/><rect x="675.5" y="84.5" width="7" height="7.5" fill="none" stroke="#bbb" stroke-width="0.7"/><path d="M676,86.5 H682" stroke="#bbb" stroke-width="0.7"/><circle cx="681" cy="90.5" r="1.4" fill="#2a95d8"/><circle cx="732" cy="88.5" r="1.8" fill="none" stroke="#2a95d8" stroke-width="0.8"/><path d="M730.7,89.8 l-1.8,1.8" fill="none" stroke="#2a95d8" stroke-width="0.9"/><path d="M675.5,102 l2.7,-2.5 l2.7,2.5 M676.3,101.5 V105 H680 V101.5" fill="none" stroke="#888" stroke-width="0.7"/><path d="M690,102.3 H686.5 M688,100.8 l-1.5,1.5 l1.5,1.5" fill="none" stroke="#777" stroke-width="0.7"/><path d="M716.5,100.8 l1.5,1.5 l-1.5,1.5 Z" fill="#ddd"/><circle cx="680" cy="116" r="3.5" fill="none" stroke="#e8e8e8" stroke-width="0.8"/><path d="M680,113.8 V116 H682" fill="none" stroke="#e8e8e8" stroke-width="0.7"/><path d="M680,124 l1.1,2.8 l3,0.1 l-2.4,1.9 l0.9,2.9 l-2.6,-1.7 l-2.6,1.7 l0.9,-2.9 l-2.4,-1.9 l3,-0.1 Z" fill="#f0f0f0"/><path d="M677.8,143.5 V136 H682.2 V143.5 L680,141.5 Z" fill="none" stroke="#e0e0e0" stroke-width="0.8"/><rect x="676.5" y="149.3" width="7" height="4.6" rx="1" fill="none" stroke="#e0e0e0" stroke-width="0.8"/><path d="M676,151.6 h1.5 M682.5,151.6 h1.5" stroke="#d33" stroke-width="0.8"/><path d="M676,160 h1.3 l1.2,4.5 h4.5 l1,-3.2 h-6" fill="none" stroke="#e0e0e0" stroke-width="0.8"/><circle cx="678.7" cy="166" r="0.7" fill="#ddd"/><circle cx="682.5" cy="166" r="0.7" fill="#ddd"/><rect x="678" y="172" width="4.5" height="4" fill="none" stroke="#e0e0e0" stroke-width="0.7"/><rect x="676" y="170" width="1.6" height="1.6" fill="#2a95d8"/><rect x="683" y="170" width="1.6" height="1.6" fill="#2a95d8"/><rect x="676" y="176.5" width="1.6" height="1.6" fill="#2a95d8"/><rect x="683" y="176.5" width="1.6" height="1.6" fill="#2a95d8"/><path d="M679,174 h2.5" stroke="#d33" stroke-width="0.7"/><path d="M608.5,408.5 h6 M609,407.5 l4,-4 l1.5,1.5" fill="none" stroke="#9ab" stroke-width="0.8"/><rect x="615" y="401.5" width="7" height="8" fill="#2a2a2a"/><path d="M616.5,408.5 V405 Q618.5,402.5 620.5,405 V408.5" fill="none" stroke="#eee" stroke-width="0.9"/><rect x="623" y="401.5" width="7" height="8" fill="#2a2a2a"/><path d="M624.5,408.5 V405 Q626.5,402.5 628.5,405 V408.5" fill="none" stroke="#eee" stroke-width="0.9"/><circle cx="634" cy="405" r="2.3" fill="none" stroke="#5aa0d8" stroke-width="0.8"/><path d="M630.5,405 h7 M634,401.5 v7" fill="none" stroke="#5aa0d8" stroke-width="0.6"/><rect x="643" y="402.3" width="1.2" height="1.2" fill="#888"/><rect x="643" y="404.3" width="1.2" height="1.2" fill="#888"/><rect x="643" y="406.3" width="1.2" height="1.2" fill="#888"/><rect x="645" y="402.3" width="1.2" height="1.2" fill="#888"/><rect x="645" y="404.3" width="1.2" height="1.2" fill="#888"/><rect x="645" y="406.3" width="1.2" height="1.2" fill="#888"/><rect x="647" y="402.3" width="1.2" height="1.2" fill="#888"/><rect x="647" y="404.3" width="1.2" height="1.2" fill="#888"/><rect x="647" y="406.3" width="1.2" height="1.2" fill="#888"/><path d="M651,404.5 l1,1 l1,-1" fill="none" stroke="#666" stroke-width="0.6"/><circle cx="733.5" cy="404.3" r="2.3" fill="none" stroke="#9ab" stroke-width="0.8"/><path d="M732,406.3 l-2,2.5 M731.5,408.5 h4.5" fill="none" stroke="#9ab" stroke-width="0.8"/><circle cx="742.5" cy="404.3" r="2.3" fill="none" stroke="#9ab" stroke-width="0.8"/><path d="M744,406.3 l2,2.5" fill="none" stroke="#9ab" stroke-width="0.8"/><path d="M733.5,416 V419.5 H740.5 V416 M737,413 V417.5 M735.3,416 l1.7,1.6 l1.7,-1.6" fill="none" stroke="#ccc" stroke-width="0.7"/><path d="M746,412.5 L749.7,419.5 H742.3 Z" fill="#f09020"/><path d="M746,414.8 v2.5" stroke="#333" stroke-width="0.7"/></svg>
</body></html>
